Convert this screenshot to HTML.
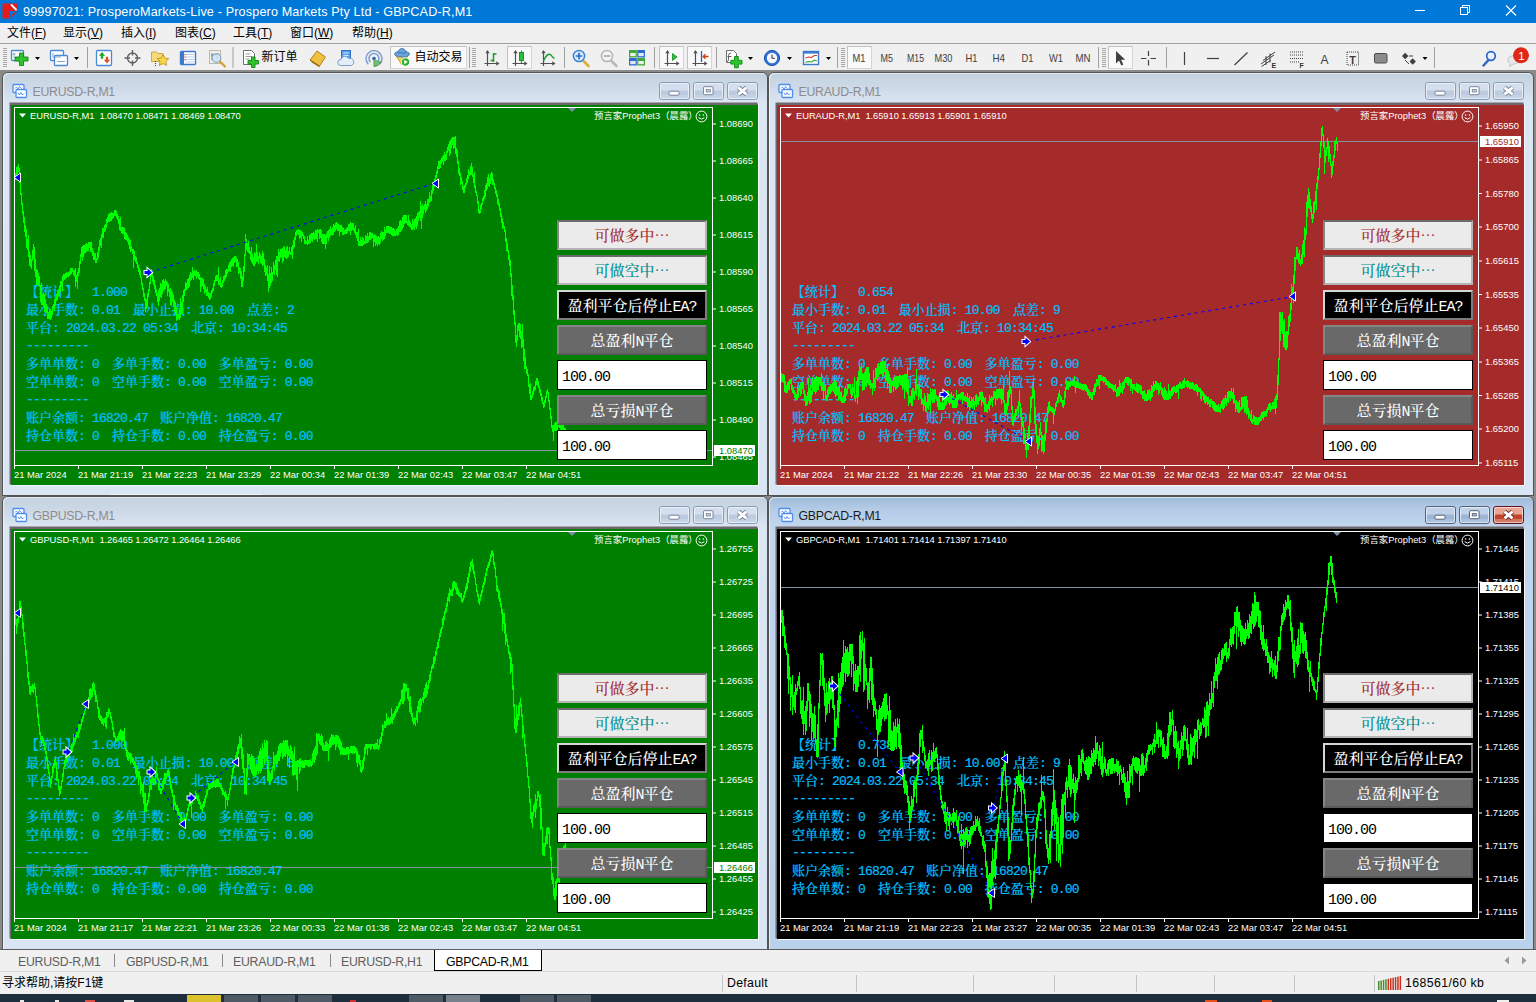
<!DOCTYPE html><html lang="zh"><head><meta charset="utf-8"><title>MT4</title><style>
*{box-sizing:border-box;margin:0;padding:0}
html,body{width:1536px;height:1002px;overflow:hidden;background:#f0f0f0}
body{position:relative;font-family:"Liberation Sans","Noto Sans CJK SC",sans-serif;font-size:12px;color:#000}
.abs{position:absolute}
#titlebar{left:0;top:0;width:1536px;height:23px;background:#0078d7;color:#fff}
#titlebar .t{position:absolute;left:23px;top:5px;font-size:12.6px;white-space:nowrap;letter-spacing:0.16px;transform-origin:0 0}
#menubar{left:0;top:23px;width:1536px;height:21px;background:#f0f0f0;border-bottom:1px solid #a0a0a0}
#menubar span{position:absolute;top:0px;font-size:12px;white-space:nowrap;font-family:"Liberation Sans","Noto Sans CJK SC",sans-serif}
#toolbar{left:0;top:44px;width:1536px;height:27px;background:#f0f0f0}
#mdi{left:0;top:70px;width:1536px;height:880px;background:#8a8a8a}
.win{position:absolute;border-radius:5px 5px 0 0;background:linear-gradient(#c3d1e0 0,#cdd9e7 14px,#dbe6f3 30px,#d9e5f2 100%);box-shadow:0 0 0 1px #545454, inset 1px 1px 0 rgba(255,255,255,.55)}
.win.act{background:linear-gradient(#9fbbdb 0,#b4cbe6 12px,#c2d6ee 30px,#b9d1ea 100%)}
.win .wt{position:absolute;left:29.5px;top:12px;font-size:12.3px;letter-spacing:-0.27px;color:#8c8c8c;white-space:nowrap;transform-origin:0 50%}
.win.act .wt{color:#1a1a1a}
.chart{position:absolute;overflow:hidden}
.tx{position:absolute;white-space:nowrap;line-height:1}
.ax{font-size:9.4px;color:#fff;font-family:"Liberation Sans",sans-serif}

.hd{letter-spacing:-0.07px}
.lab{font-size:9.4px;color:#fff;font-family:"Liberation Sans","Noto Sans CJK SC",sans-serif}
.cur{background:#fff;padding:1px 0 1px 5px;width:41px;height:11px;line-height:9px}
.pn{font-size:13px;color:#00bfff;height:16px;line-height:16px;-webkit-text-stroke:0.2px #00bfff}
.cj{font-family:"Noto Serif CJK SC","Noto Sans CJK SC",serif;font-weight:500}
.hw{font-family:"Liberation Mono",monospace;letter-spacing:-0.8px}
.btn .hw{letter-spacing:-1px}
.btn{position:absolute;width:150px;height:30px;font-size:15px;line-height:26px;text-align:center;white-space:nowrap;border:2px solid;overflow:hidden}
.b1{background:#ebebeb;border-color:#6b6b6b #b4b4b4 #b4b4b4 #858585}
.b2{background:#000;color:#fff;border-color:#d6d6d6 #7d7d7d #7d7d7d #d6d6d6}
.b3{background:#696969;color:#fff;border-color:#858585 #5a5a5a #5a5a5a #858585}
.ed{background:#fff;color:#000;border:1px solid #000;text-align:left;padding-left:4px;line-height:29px}

.tab{font-size:12.300px;color:#5e5e5e;letter-spacing:-0.250px}
</style></head><body>
<div id="titlebar" class="abs"><span class="t" id="ttl">99997021: ProsperoMarkets-Live - Prospero Markets Pty Ltd - GBPCAD-R,M1</span><svg class="abs" style="left:2px;top:3px" width="17" height="17" viewBox="0 0 17 17"><rect x="0.5" y="0.5" width="15" height="15" fill="#e41b1b"/><rect x="8" y="8" width="8" height="8" fill="#0078d7"/><path d="M9.500 2 l4.500 4.500" stroke="#fff" stroke-width="1.800" stroke-linecap="round"/><path d="M9.500 13.500 l4 -4" stroke="#e41b1b" stroke-width="1.500" stroke-linecap="round"/></svg><svg class="abs" style="left:1400px;top:0" width="136" height="23" viewBox="0 0 136 23"><path d="M15 10.500 h10" stroke="#fff" stroke-width="1"/><rect x="60.500" y="7.500" width="7" height="7" fill="none" stroke="#fff"/><path d="M62.500 7.500 v-2 h7 v7 h-2" fill="none" stroke="#fff"/><path d="M106 5.500 l10 10 M116 5.500 l-10 10" stroke="#fff" stroke-width="1.100"/></svg></div>
<div id="menubar" class="abs">
<span style="left:7px">文件(<u>F</u>)</span>
<span style="left:63px">显示(<u>V</u>)</span>
<span style="left:121px">插入(<u>I</u>)</span>
<span style="left:175px">图表(<u>C</u>)</span>
<span style="left:233px">工具(<u>T</u>)</span>
<span style="left:290px">窗口(<u>W</u>)</span>
<span style="left:352px">帮助(<u>H</u>)</span>
</div>
<div id="toolbar" class="abs"><svg width="1536" height="27" viewBox="0 0 1536 27" style="position:absolute;left:0;top:0;font-family:'Liberation Sans','Noto Sans CJK SC',sans-serif"><rect x="3" y="4" width="4" height="1" fill="#a8a8a8"/><rect x="3" y="6" width="4" height="1" fill="#a8a8a8"/><rect x="3" y="8" width="4" height="1" fill="#a8a8a8"/><rect x="3" y="10" width="4" height="1" fill="#a8a8a8"/><rect x="3" y="12" width="4" height="1" fill="#a8a8a8"/><rect x="3" y="14" width="4" height="1" fill="#a8a8a8"/><rect x="3" y="16" width="4" height="1" fill="#a8a8a8"/><rect x="3" y="18" width="4" height="1" fill="#a8a8a8"/><rect x="3" y="20" width="4" height="1" fill="#a8a8a8"/><rect x="3" y="22" width="4" height="1" fill="#a8a8a8"/><rect x="11.5" y="6.5" width="12" height="10" rx="1" fill="#fff" stroke="#4a8ad4" stroke-width="1.3"/><path d="M14 9 v5 M14 9 l-1.5 2 M14 9 l1.5 2" stroke="#7a9cc4" fill="none" stroke-width="0.8"/><path d="M19.5 9 h4 v4 h4.5 v4 h-4.5 v4.5 h-4 v-4.5 h-4.5 v-4 h4.500 z" fill="#2fc42f" stroke="#0f8a0f" stroke-width="0.9"/><path d="M35 13 h5 l-2.5 3 z" fill="#000"/><rect x="50.500" y="6.500" width="13" height="10" rx="1" fill="#fff" stroke="#4a8ad4" stroke-width="1.3"/><rect x="54.500" y="11.500" width="13" height="10" rx="1" fill="#fff" stroke="#4a8ad4" stroke-width="1.3"/><path d="M53 9 v5 M55 13 h6 M57 17.5 h8" stroke="#7a9cc4" stroke-width="0.9" fill="none"/><path d="M74 13 h5 l-2.5 3 z" fill="#000"/><rect x="87.0" y="3" width="1" height="21" fill="#a0a0a0"/><rect x="96.500" y="6.500" width="15" height="15" rx="1" fill="#fff" stroke="#4a8ad4" stroke-width="1.3"/><path d="M102 8 l3.200 3.800 h-2 v3 h-2.400 v-3 h-2 z" fill="#22a822"/><path d="M107 19.500 l3.200 -3.800 h-2 v-3 h-2.400 v3 h-2 z" fill="#e0502a"/><circle cx="132.500" cy="14" r="5" fill="none" stroke="#606060" stroke-width="1.4"/><path d="M132.500 6 v5.500 M132.500 16.500 v5.500 M124.500 14 h5.500 M135 14 h5.500" stroke="#606060" stroke-width="1.4"/><path d="M151.500 8 h5 l1.500 1.500 h5 v8 h-11.500 z" fill="#f4dc7c" stroke="#c8a030" stroke-width="0.9"/><path d="M163 10.500 l1.800 3.600 4 .5 -2.900 2.800 .7 4 -3.600 -1.900 -3.600 1.900 .7 -4 -2.900 -2.800 4 -.5 z" fill="#f8d84a" stroke="#c09020" stroke-width="0.9"/><path d="M155.500 17 v5" stroke="#404040" stroke-width="1" stroke-dasharray="1 1"/><rect x="180.500" y="7.500" width="15" height="13" rx="1" fill="#fff" stroke="#3b78d0" stroke-width="1.4"/><rect x="181" y="8" width="3" height="12" fill="#3b78d0"/><path d="M186 10.500 h8 M186 13 h8 M186 15.500 h8 M186 18 h8" stroke="#a8c0e4" stroke-width="0.8"/><rect x="184.500" y="10" width="1.200" height="1.200" fill="#e03030"/><rect x="184.500" y="12.500" width="1.200" height="1.200" fill="#e03030"/><rect x="184.500" y="15" width="1.200" height="1.200" fill="#e03030"/><rect x="209.500" y="6.500" width="11" height="13" fill="#f4f0e8" stroke="#c0b8a8" stroke-width="1"/><path d="M212 9 v7 M217 9 v7 M211 11 h7" stroke="#707888" stroke-width="0.9"/><circle cx="216.500" cy="14" r="4.300" fill="#cfe4f8" fill-opacity="0.85" stroke="#8aa8c8" stroke-width="1.2"/><path d="M220 17.500 l5 5" stroke="#d0a030" stroke-width="2.200" stroke-linecap="round"/><rect x="232.5" y="3" width="1" height="21" fill="#a0a0a0"/><path d="M243.500 6.500 h8 l3 3 v11 h-11 z" fill="#fff" stroke="#707070" stroke-width="1"/><path d="M245.500 10 h5 M245.500 12.500 h6.500 M245.500 15 h4" stroke="#909090" stroke-width="0.9"/><path d="M251.500 13 h3.500 v3.500 h3.500 v3.500 h-3.500 v3.500 h-3.500 v-3.500 h-3.500 v-3.500 h3.500 z" fill="#2fc42f" stroke="#0f8a0f" stroke-width="0.9"/><text x="261.500" y="17" font-size="12" fill="#000">新订单</text><path d="M310 16 l7 -9 8.500 6 -6 9 z" fill="#f0c040" stroke="#b88418" stroke-width="1"/><path d="M310 16 l9.500 6 M311.500 17.800 l8 5" stroke="#8a5c10" stroke-width="0.9" fill="none"/><rect x="341.500" y="6.500" width="9" height="10" fill="#5aa0ec" stroke="#2f6fc4" stroke-width="1"/><path d="M343.500 9 h5 M343.500 11.500 h5" stroke="#d8e8fc" stroke-width="1"/><path d="M340.500 21.500 a3 3 0 0 1 .5 -6 a4 4 0 0 1 7.500 -1 a3.500 3.500 0 0 1 3 7 z" fill="#e4eefa" stroke="#7c9cc8" stroke-width="1"/><circle cx="374" cy="14.500" r="1.800" fill="#3060c0"/><path d="M370.500 18 a5 5 0 1 1 7 0 M368.300 20.200 a8 8 0 1 1 11.400 0" fill="none" stroke="#7c9cd0" stroke-width="1.500"/><path d="M374 15 v7.500 a8 8 0 0 0 7 -5" fill="#58b058" fill-opacity="0.800" stroke="#3a8a3a" stroke-width="0.800"/><rect x="390.500" y="2.500" width="76" height="22" fill="#f9f9f9" stroke="#d4d4d4"/><path d="M390.500 24.500 V2.500 H466.500" stroke="#c2c2c2" fill="none"/><path d="M395.500 11 l6.500 10 6.500 -10 z" fill="#f0d060" stroke="#b89020" stroke-width="0.9"/><ellipse cx="402" cy="10" rx="7.500" ry="3" fill="#6aa4dc" stroke="#3a70b0" stroke-width="0.800"/><path d="M398 9 a4 4.500 0 0 1 8 0 z" fill="#6aa4dc" stroke="#3a70b0" stroke-width="0.800"/><circle cx="405.500" cy="18" r="4.200" fill="#28b428" stroke="#fff" stroke-width="0.900"/><path d="M404.200 15.800 v4.400 l3.600 -2.200 z" fill="#fff"/><text x="414.500" y="17" font-size="12" fill="#000">自动交易</text><rect x="469.0" y="3" width="1" height="21" fill="#a0a0a0"/><rect x="472" y="4" width="4" height="1" fill="#a8a8a8"/><rect x="472" y="6" width="4" height="1" fill="#a8a8a8"/><rect x="472" y="8" width="4" height="1" fill="#a8a8a8"/><rect x="472" y="10" width="4" height="1" fill="#a8a8a8"/><rect x="472" y="12" width="4" height="1" fill="#a8a8a8"/><rect x="472" y="14" width="4" height="1" fill="#a8a8a8"/><rect x="472" y="16" width="4" height="1" fill="#a8a8a8"/><rect x="472" y="18" width="4" height="1" fill="#a8a8a8"/><rect x="472" y="20" width="4" height="1" fill="#a8a8a8"/><rect x="472" y="22" width="4" height="1" fill="#a8a8a8"/><path d="M487.5 8 V22 M484.5 19.5 H498" stroke="#505050" stroke-width="1.2" fill="none"/><path d="M487.5 6 l-2.2 3.2 h4.4 z M499.5 19.5 l-3.2 -2.2 v4.4 z" fill="#505050"/><path d="M493.500 9 v9 M493.500 10 h3 M490.500 16.500 h3" stroke="#189a30" stroke-width="1.5" fill="none"/><rect x="507.5" y="2.5" width="24" height="22" fill="#f9f9f9" stroke="#d4d4d4"/><path d="M507.5 24.5 V2.5 H531.5" stroke="#c2c2c2" fill="none"/><path d="M515.5 8 V22 M512.5 19.5 H526" stroke="#505050" stroke-width="1.2" fill="none"/><path d="M515.5 6 l-2.2 3.2 h4.4 z M527.5 19.5 l-3.2 -2.2 v4.4 z" fill="#505050"/><path d="M521.500 6.500 v12.500" stroke="#189a30" stroke-width="1.200"/><rect x="519.500" y="8.500" width="4" height="8" fill="#28c040" stroke="#148a28" stroke-width="0.900"/><path d="M543.5 8 V22 M540.5 19.5 H554" stroke="#505050" stroke-width="1.2" fill="none"/><path d="M543.5 6 l-2.2 3.2 h4.4 z M555.5 19.5 l-3.2 -2.2 v4.4 z" fill="#505050"/><path d="M543.500 17 q5 -11 9 -4 l2 1.500" stroke="#189a30" stroke-width="1.400" fill="none"/><rect x="564.0" y="3" width="1" height="21" fill="#a0a0a0"/><path d="M584 17.500 l4.500 4.500" stroke="#d8b030" stroke-width="2.600" stroke-linecap="round"/><circle cx="579" cy="12" r="5.600" fill="#d8ebfc" stroke="#3c80d4" stroke-width="1.500"/><path d="M579 8.800 v6.400 M575.800 12 h6.400" stroke="#2c6cc8" stroke-width="1.700"/><path d="M612 17.500 l4.500 4.500" stroke="#b8b8b8" stroke-width="2.600" stroke-linecap="round"/><circle cx="607" cy="12" r="5.600" fill="#f4f4f4" stroke="#b4b4b4" stroke-width="1.500"/><path d="M603.800 12 h6.400" stroke="#a8a8a8" stroke-width="1.700"/><rect x="629" y="6" width="7.800" height="7.500" fill="#3ea83e"/><rect x="637.200" y="6" width="7.800" height="7.500" fill="#2e6ad0"/><rect x="629" y="14" width="7.800" height="7.500" fill="#2e6ad0"/><rect x="637.200" y="14" width="7.800" height="7.500" fill="#3ea83e"/><rect x="630.200" y="9" width="5.400" height="3.200" fill="#e8f4e8"/><rect x="638.400" y="9" width="5.400" height="3.200" fill="#e0eafc"/><rect x="630.200" y="17" width="5.400" height="3.200" fill="#e0eafc"/><rect x="638.400" y="17" width="5.400" height="3.200" fill="#e8f4e8"/><rect x="654.0" y="3" width="1" height="21" fill="#a0a0a0"/><rect x="659.5" y="2.5" width="24" height="22" fill="#f9f9f9" stroke="#d4d4d4"/><path d="M659.5 24.5 V2.5 H683.5" stroke="#c2c2c2" fill="none"/><path d="M667.5 8 V22 M664.5 19.5 H678" stroke="#505050" stroke-width="1.2" fill="none"/><path d="M667.5 6 l-2.2 3.2 h4.4 z M679.5 19.5 l-3.2 -2.2 v4.4 z" fill="#505050"/><path d="M672.500 9.500 v7 l4.500 -3.500 z" fill="#30c040" stroke="#148a28" stroke-width="0.800"/><rect x="687.5" y="2.5" width="24" height="22" fill="#f9f9f9" stroke="#d4d4d4"/><path d="M687.5 24.5 V2.5 H711.5" stroke="#c2c2c2" fill="none"/><path d="M695.5 8 V22 M692.5 19.5 H706" stroke="#505050" stroke-width="1.2" fill="none"/><path d="M695.5 6 l-2.2 3.2 h4.4 z M707.5 19.5 l-3.2 -2.2 v4.4 z" fill="#505050"/><path d="M701.500 7 v11" stroke="#2060c0" stroke-width="1.300"/><path d="M708.500 12.500 h-5 m2 -2.200 l-2.400 2.200 2.400 2.200" stroke="#d04010" stroke-width="1.300" fill="none"/><rect x="716.0" y="3" width="1" height="21" fill="#a0a0a0"/><path d="M726.500 6.500 h7 l3 3 v9 h-10 z" fill="#fff" stroke="#707070" stroke-width="1"/><path d="M731 9 q-2.500 0 -2.500 2.500 v4 q0 2 -1.500 2 M727.500 12.500 h4" stroke="#505050" stroke-width="0.900" fill="none"/><path d="M734.500 12.500 h3.800 v3.800 h3.700 v3.800 h-3.700 v3.700 h-3.800 v-3.700 h-3.700 v-3.800 h3.700 z" fill="#2fc42f" stroke="#0f8a0f" stroke-width="0.900"/><path d="M748 13 h5 l-2.5 3 z" fill="#000"/><circle cx="772" cy="14" r="7.600" fill="#2f74d8" stroke="#1c50a8" stroke-width="1"/><circle cx="772" cy="14" r="5.200" fill="#f4f8ff"/><path d="M772 10.500 v3.800 h3" stroke="#404040" stroke-width="1.100" fill="none"/><path d="M787 13 h5 l-2.5 3 z" fill="#000"/><rect x="803.500" y="7.500" width="15" height="13" fill="#fff" stroke="#3b78d0" stroke-width="1.400"/><rect x="803" y="7" width="16" height="2.600" fill="#3b78d0"/><path d="M805.500 14 l3 -1 3 .5 3 -2 2.500 0" stroke="#d03828" stroke-width="1.100" fill="none"/><path d="M805.500 18.500 l3 -1 3 .5 3 -2 2.500 1" stroke="#28a030" stroke-width="1.100" fill="none"/><path d="M826 13 h5 l-2.5 3 z" fill="#000"/><rect x="837.0" y="3" width="1" height="21" fill="#a0a0a0"/><rect x="841" y="4" width="4" height="1" fill="#a8a8a8"/><rect x="841" y="6" width="4" height="1" fill="#a8a8a8"/><rect x="841" y="8" width="4" height="1" fill="#a8a8a8"/><rect x="841" y="10" width="4" height="1" fill="#a8a8a8"/><rect x="841" y="12" width="4" height="1" fill="#a8a8a8"/><rect x="841" y="14" width="4" height="1" fill="#a8a8a8"/><rect x="841" y="16" width="4" height="1" fill="#a8a8a8"/><rect x="841" y="18" width="4" height="1" fill="#a8a8a8"/><rect x="841" y="20" width="4" height="1" fill="#a8a8a8"/><rect x="841" y="22" width="4" height="1" fill="#a8a8a8"/><rect x="847.5" y="2.5" width="24" height="22" fill="#f9f9f9" stroke="#d4d4d4"/><path d="M847.5 24.5 V2.5 H871.5" stroke="#c2c2c2" fill="none"/><text x="852.5" y="18" font-size="10.500" fill="#404040" textLength="13" lengthAdjust="spacingAndGlyphs">M1</text><text x="880.5" y="18" font-size="10.500" fill="#404040" textLength="12.5" lengthAdjust="spacingAndGlyphs">M5</text><text x="907" y="18" font-size="10.500" fill="#404040" textLength="17" lengthAdjust="spacingAndGlyphs">M15</text><text x="934.5" y="18" font-size="10.500" fill="#404040" textLength="18" lengthAdjust="spacingAndGlyphs">M30</text><text x="965.5" y="18" font-size="10.500" fill="#404040" textLength="12" lengthAdjust="spacingAndGlyphs">H1</text><text x="992.5" y="18" font-size="10.500" fill="#404040" textLength="12.5" lengthAdjust="spacingAndGlyphs">H4</text><text x="1021.5" y="18" font-size="10.500" fill="#404040" textLength="12" lengthAdjust="spacingAndGlyphs">D1</text><text x="1049" y="18" font-size="10.500" fill="#404040" textLength="14" lengthAdjust="spacingAndGlyphs">W1</text><text x="1075.5" y="18" font-size="10.500" fill="#404040" textLength="15" lengthAdjust="spacingAndGlyphs">MN</text><rect x="1098.0" y="3" width="1" height="21" fill="#a0a0a0"/><rect x="1102" y="4" width="4" height="1" fill="#a8a8a8"/><rect x="1102" y="6" width="4" height="1" fill="#a8a8a8"/><rect x="1102" y="8" width="4" height="1" fill="#a8a8a8"/><rect x="1102" y="10" width="4" height="1" fill="#a8a8a8"/><rect x="1102" y="12" width="4" height="1" fill="#a8a8a8"/><rect x="1102" y="14" width="4" height="1" fill="#a8a8a8"/><rect x="1102" y="16" width="4" height="1" fill="#a8a8a8"/><rect x="1102" y="18" width="4" height="1" fill="#a8a8a8"/><rect x="1102" y="20" width="4" height="1" fill="#a8a8a8"/><rect x="1102" y="22" width="4" height="1" fill="#a8a8a8"/><rect x="1108.5" y="2.5" width="24" height="22" fill="#f9f9f9" stroke="#d4d4d4"/><path d="M1108.5 24.5 V2.5 H1132.5" stroke="#c2c2c2" fill="none"/><path d="M1116 7 v12.500 l3 -3 2.300 5 2 -1 -2.300 -4.800 h4.200 z" fill="#404040"/><path d="M1148.500 7 v5 M1148.500 16 v5.500 M1141 14.500 h5.500 M1150.500 14.500 h5.500" stroke="#404040" stroke-width="1.200"/><rect x="1166.0" y="3" width="1" height="21" fill="#a0a0a0"/><path d="M1184.500 8 v13" stroke="#404040" stroke-width="1.200"/><path d="M1207 14.500 h12" stroke="#404040" stroke-width="1.200"/><path d="M1234.500 21 l13 -12.500" stroke="#404040" stroke-width="1.200"/><path d="M1261 20 l13 -9 M1263 16.500 l12 -8.500 M1261.500 22.500 l9 -6 M1266 12 v9 M1270 9.500 v9" stroke="#404040" stroke-width="1"/><text x="1271.500" y="24" font-size="7" font-weight="bold" fill="#303030">E</text><path d="M1290 8 h13 M1290 11 h13 M1290 14.500 h13 M1290 18 h9" stroke="#404040" stroke-width="1" stroke-dasharray="1 1"/><text x="1299.500" y="24" font-size="7" font-weight="bold" fill="#303030">F</text><text x="1320.500" y="20" font-size="12" fill="#404040">A</text><rect x="1347" y="8" width="11.500" height="13" fill="none" stroke="#404040" stroke-width="1" stroke-dasharray="1 1"/><text x="1349.200" y="19.500" font-size="11" font-weight="bold" fill="#404040">T</text><rect x="1374.500" y="9.500" width="12.500" height="9.500" rx="1.500" fill="#8c8c8c" stroke="#4c4c4c" stroke-width="1"/><path d="M1402 12 l3.200 -3.200 3.200 3.200 -3.200 3.200 z M1409.500 17.500 l3.200 -3.200 3.200 3.200 -3.200 3.200 z" fill="#404040"/><path d="M1405 16 l4 4 M1409 12 l4 -0" stroke="#404040" stroke-width="1" fill="none"/><path d="M1422.5 13 h5 l-2.5 3 z" fill="#000"/><rect x="1434.0" y="3" width="1" height="21" fill="#a0a0a0"/><path d="M1483.500 21.500 l5 -5.500" stroke="#2a62c8" stroke-width="2.400" stroke-linecap="round"/><circle cx="1491" cy="12" r="4.300" fill="#eaf2fe" stroke="#2a62c8" stroke-width="1.700"/><path d="M1508 15 a5.500 4 0 1 1 5 5 l-3.500 2.500 .8 -3 a5 4 0 0 1 -2.300 -4.500 z" fill="#e8e8e8" stroke="#b8b8b8" stroke-width="0.800"/><circle cx="1521" cy="11.300" r="8" fill="#e02818"/><text x="1518.200" y="15.500" font-size="11.500" fill="#fff">1</text></svg></div>
<div id="mdi" class="abs"></div>
<div class="win" style="left:3px;top:73px;width:764px;height:422px"><span class="wt">EURUSD-R,M1</span><svg class="abs" style="left:9px;top:10px" width="16" height="16" viewBox="0 0 16 16"><rect x="1" y="1.500" width="11" height="8" rx="1" fill="#fff" stroke="#4c8cf0" stroke-width="1.300"/><path d="M3 5.500 l1.500 -1.500 1.500 2 1.500 -2.500 2 2" stroke="#4c8cf0" stroke-width="0.900" fill="none"/><rect x="4" y="6.500" width="10.500" height="8" rx="1" fill="#fff" stroke="#4c8cf0" stroke-width="1.300"/><path d="M6 9.500 l1.500 2.500 1.500 -2.500 1.500 2.500 1.500 -1.500" stroke="#4c8cf0" stroke-width="0.900" fill="none"/></svg><svg class="abs" style="right:77px;top:9px" width="31" height="18" viewBox="0 0 31 18"><rect x="0.500" y="0.500" width="30" height="17" rx="2.500" fill="#d3deee" stroke="#8d9bb6"/><rect x="1.500" y="8.500" width="28" height="8" rx="1.500" fill="#bccbe0"/><rect x="1.500" y="13" width="28" height="3.500" rx="1.500" fill="#c6d3e6"/><rect x="1.500" y="1.500" width="28" height="15" rx="1.800" fill="none" stroke="#fff" stroke-opacity="0.550"/><rect x="10" y="9.200" width="10" height="4" rx="1" fill="#fff" stroke="#6e7990" stroke-width="0.900"/></svg><svg class="abs" style="right:43px;top:9px" width="31" height="18" viewBox="0 0 31 18"><rect x="0.500" y="0.500" width="30" height="17" rx="2.500" fill="#d3deee" stroke="#8d9bb6"/><rect x="1.500" y="8.500" width="28" height="8" rx="1.500" fill="#bccbe0"/><rect x="1.500" y="13" width="28" height="3.500" rx="1.500" fill="#c6d3e6"/><rect x="1.500" y="1.500" width="28" height="15" rx="1.800" fill="none" stroke="#fff" stroke-opacity="0.550"/><rect x="10.500" y="4.700" width="9.500" height="8" rx="1" fill="#fff" stroke="#6e7990" stroke-width="0.900"/><rect x="13.200" y="7.600" width="4.100" height="2.400" fill="#bccbe0" stroke="#6e7990" stroke-width="0.700"/></svg><svg class="abs" style="right:9px;top:9px" width="31" height="18" viewBox="0 0 31 18"><rect x="0.500" y="0.500" width="30" height="17" rx="2.500" fill="#d3deee" stroke="#8d9bb6"/><rect x="1.500" y="8.500" width="28" height="8" rx="1.500" fill="#bccbe0"/><rect x="1.500" y="13" width="28" height="3.500" rx="1.500" fill="#c6d3e6"/><rect x="1.500" y="1.500" width="28" height="15" rx="1.800" fill="none" stroke="#fff" stroke-opacity="0.550"/><path d="M11.500 5.600 l8 6.800 M19.500 5.600 l-8 6.800" stroke="#6e7990" stroke-width="4.600" fill="none" stroke-linecap="butt"/><path d="M11.500 5.600 l8 6.800 M19.500 5.600 l-8 6.800" stroke="#fff" stroke-width="2.900" fill="none"/></svg></div>
<div class="chart" id="c1" style="left:11px;top:104px;width:747px;height:381px;background:#008000;box-shadow:-1px -1px 0 0.5px #6e686e, inset 0 1px 0 #6e686e, 1px 1px 0 0 #f4f8fc"><span class="tx pn" style="left:15.0px;top:179.0px"><span class="cj">【统计】</span><span class="hw">&nbsp;&nbsp;1.000</span></span>
<span class="tx pn" style="left:15.0px;top:197.0px"><span class="cj">最小手数</span><span class="hw">:&nbsp;0.01</span></span>
<span class="tx pn" style="left:121.8px;top:197.0px"><span class="cj">最小止损</span><span class="hw">:&nbsp;10.00</span></span>
<span class="tx pn" style="left:235.9px;top:197.0px"><span class="cj">点差</span><span class="hw">:&nbsp;2</span></span>
<span class="tx pn" style="left:15.0px;top:215.0px"><span class="cj">平台</span><span class="hw">:&nbsp;2024.03.22&nbsp;05:34</span></span>
<span class="tx pn" style="left:180.0px;top:215.0px"><span class="cj">北京</span><span class="hw">:&nbsp;10:34:45</span></span>
<span class="tx pn" style="left:15.0px;top:233.0px"><span class="hw">---------</span></span>
<span class="tx pn" style="left:15.0px;top:251.0px"><span class="cj">多单单数</span><span class="hw">:&nbsp;0</span></span>
<span class="tx pn" style="left:101.0px;top:251.0px"><span class="cj">多单手数</span><span class="hw">:&nbsp;0.00</span></span>
<span class="tx pn" style="left:207.8px;top:251.0px"><span class="cj">多单盈亏</span><span class="hw">:&nbsp;0.00</span></span>
<span class="tx pn" style="left:15.0px;top:269.0px"><span class="cj">空单单数</span><span class="hw">:&nbsp;0</span></span>
<span class="tx pn" style="left:101.0px;top:269.0px"><span class="cj">空单手数</span><span class="hw">:&nbsp;0.00</span></span>
<span class="tx pn" style="left:207.8px;top:269.0px"><span class="cj">空单盈亏</span><span class="hw">:&nbsp;0.00</span></span>
<span class="tx pn" style="left:15.0px;top:287.0px"><span class="hw">---------</span></span>
<span class="tx pn" style="left:15.0px;top:305.0px"><span class="cj">账户余额</span><span class="hw">:&nbsp;16820.47</span></span>
<span class="tx pn" style="left:149.0px;top:305.0px"><span class="cj">账户净值</span><span class="hw">:&nbsp;16820.47</span></span>
<span class="tx pn" style="left:15.0px;top:323.0px"><span class="cj">持仓单数</span><span class="hw">:&nbsp;0</span></span>
<span class="tx pn" style="left:101.0px;top:323.0px"><span class="cj">持仓手数</span><span class="hw">:&nbsp;0.00</span></span>
<span class="tx pn" style="left:207.8px;top:323.0px"><span class="cj">持仓盈亏</span><span class="hw">:&nbsp;0.00</span></span>
<div class="abs" style="left:3px;top:346.0px;width:698px;height:1px;background:#8492a6"></div>
<svg class="abs" style="left:0;top:0" width="747" height="382" viewBox="0 0 747 382"><path d="M3.5 66.1V76.5M4.5 68.5V76.2M5.5 62.5V73.5M6.5 62.0V69.8M7.5 60.1V67.7M8.5 63.5V79.1M9.5 75.7V91.2M10.5 88.7V100.7M11.5 98.7V109.6M12.5 106.9V118.9M13.5 113.4V127.8M14.5 121.1V132.5M15.5 125.4V143.5M16.5 135.2V146.0M17.5 130.7V153.3M18.5 146.9V161.6M19.5 151.2V162.6M20.5 155.3V164.5M21.5 146.0V157.0M22.5 139.9V155.3M23.5 143.2V167.4M24.5 155.4V173.4M25.5 164.7V180.6M26.5 166.2V181.7M27.5 168.8V181.9M28.5 172.0V183.0M29.5 181.0V197.6M30.5 179.0V200.6M31.5 189.6V201.4M32.5 188.9V202.8M33.5 189.8V208.4M34.5 194.5V207.6M35.5 199.6V209.2M36.5 202.4V215.1M37.5 207.5V215.0M38.5 207.0V215.3M39.5 205.3V215.5M40.5 206.6V213.6M41.5 201.5V210.6M42.5 200.1V205.4M43.5 194.8V207.4M44.5 193.4V202.3M45.5 190.4V196.6M46.5 187.2V196.0M47.5 185.0V192.9M48.5 181.7V191.5M49.5 176.8V187.7M50.5 177.2V182.5M51.5 171.6V187.3M52.5 169.5V176.9M53.5 170.2V176.2M54.5 168.9V175.3M55.5 167.7V174.1M56.5 168.5V173.2M57.5 167.8V173.4M58.5 166.8V172.0M59.5 163.7V171.0M60.5 163.7V170.2M61.5 163.7V168.1M62.5 165.7V170.8M63.5 166.2V172.8M64.5 164.3V183.3M65.5 170.5V177.8M66.5 168.1V185.4M67.5 163.8V172.0M68.5 156.6V168.8M69.5 150.2V159.6M70.5 142.6V152.6M71.5 141.5V156.9M72.5 141.0V153.1M73.5 140.5V150.1M74.5 139.5V148.7M75.5 138.8V148.2M76.5 139.8V146.8M77.5 138.1V146.5M78.5 138.1V144.1M79.5 138.0V148.3M80.5 137.9V147.6M81.5 143.9V151.5M82.5 146.8V155.5M83.5 149.2V156.1M84.5 149.0V159.3M85.5 153.7V158.8M86.5 148.0V156.1M87.5 142.5V154.1M88.5 136.3V146.7M89.5 133.5V141.7M90.5 129.9V143.6M91.5 123.6V133.7M92.5 124.2V133.8M93.5 121.1V128.0M94.5 119.5V127.2M95.5 114.8V123.8M96.5 113.4V118.7M97.5 110.1V117.9M98.5 109.4V117.5M99.5 108.5V117.4M100.5 107.9V117.2M101.5 109.1V114.6M102.5 109.0V113.9M103.5 106.3V111.8M104.5 106.0V112.3M105.5 106.5V114.2M106.5 110.3V115.8M107.5 111.5V120.0M108.5 115.1V125.9M109.5 113.3V127.2M110.5 122.7V128.9M111.5 123.4V130.2M112.5 122.6V129.8M113.5 123.7V135.2M114.5 127.5V135.7M115.5 129.3V135.5M116.5 130.5V137.9M117.5 133.2V140.5M118.5 135.0V145.3M119.5 136.0V147.9M120.5 141.6V147.3M121.5 144.7V149.8M122.5 144.5V164.4M123.5 147.1V156.0M124.5 151.8V157.9M125.5 153.3V160.2M126.5 157.6V163.5M127.5 161.4V168.3M128.5 163.9V170.8M129.5 166.1V174.4M130.5 172.5V181.3M131.5 178.9V186.2M132.5 183.7V192.9M133.5 189.1V196.5M134.5 194.2V207.7M135.5 194.8V204.6M136.5 188.8V203.9M137.5 184.7V192.9M138.5 177.5V187.1M139.5 170.9V180.3M140.5 165.2V172.8M141.5 166.0V177.5M142.5 171.5V181.3M143.5 176.4V185.4M144.5 180.5V188.9M145.5 184.7V191.8M146.5 189.3V198.2M147.5 185.7V202.1M148.5 183.6V196.8M149.5 179.0V193.4M150.5 179.7V193.8M151.5 176.2V189.5M152.5 175.0V186.9M153.5 176.5V185.7M154.5 175.4V185.0M155.5 176.7V182.0M156.5 178.1V192.3M157.5 180.0V188.0M158.5 184.6V192.5M159.5 184.4V200.9M160.5 186.2V201.6M161.5 188.2V197.7M162.5 190.7V201.5M163.5 196.3V207.8M164.5 197.9V210.8M165.5 203.1V216.7M166.5 209.6V216.1M167.5 209.6V214.8M168.5 205.2V215.7M169.5 193.5V213.5M170.5 198.3V209.1M171.5 190.6V210.2M172.5 185.8V197.6M173.5 184.5V191.9M174.5 178.4V187.2M175.5 178.8V185.8M176.5 175.1V184.9M177.5 173.9V184.4M178.5 170.9V182.9M179.5 168.1V177.3M180.5 169.4V176.4M181.5 162.8V173.8M182.5 167.1V176.3M183.5 166.3V172.3M184.5 166.5V172.4M185.5 165.9V175.1M186.5 167.6V173.3M187.5 167.9V175.4M188.5 169.7V176.4M189.5 173.0V188.4M190.5 173.5V182.8M191.5 173.8V181.5M192.5 174.8V185.2M193.5 180.4V189.7M194.5 181.9V187.7M195.5 185.1V191.7M196.5 183.0V192.1M197.5 187.8V194.0M198.5 189.4V195.9M199.5 189.0V195.4M200.5 186.3V192.8M201.5 184.0V189.3M202.5 178.7V187.2M203.5 176.3V182.1M204.5 171.5V178.3M205.5 170.6V176.9M206.5 170.9V177.0M207.5 162.9V180.8M208.5 174.5V180.8M209.5 173.4V182.8M210.5 178.6V184.3M211.5 176.4V182.9M212.5 171.9V179.2M213.5 170.9V176.7M214.5 166.1V174.7M215.5 165.4V173.2M216.5 164.5V169.9M217.5 160.7V168.3M218.5 157.6V166.5M219.5 156.9V167.7M220.5 154.9V162.7M221.5 153.9V161.8M222.5 152.7V162.9M223.5 151.6V158.9M224.5 152.0V158.2M225.5 153.2V162.8M226.5 154.9V162.8M227.5 158.3V170.0M228.5 162.6V169.3M229.5 163.9V175.1M230.5 167.4V182.7M231.5 171.6V183.1M232.5 161.7V176.8M233.5 150.0V167.8M234.5 129.6V151.9M235.5 135.4V146.0M236.5 139.2V147.6M237.5 136.9V149.2M238.5 143.3V149.7M239.5 147.1V155.7M240.5 143.3V157.8M241.5 149.9V159.7M242.5 152.5V162.1M243.5 148.1V162.0M244.5 149.2V159.8M245.5 140.3V158.3M246.5 148.4V158.3M247.5 152.4V159.6M248.5 147.6V155.1M249.5 150.1V158.8M250.5 151.7V160.1M251.5 146.9V161.9M252.5 149.0V161.0M253.5 155.3V168.2M254.5 160.6V171.6M255.5 162.5V170.5M256.5 161.3V177.1M257.5 169.8V188.3M258.5 162.3V183.5M259.5 168.7V181.5M260.5 162.9V178.6M261.5 167.9V176.7M262.5 158.4V169.9M263.5 160.8V170.7M264.5 155.8V165.5M265.5 151.6V170.6M266.5 152.2V173.4M267.5 145.0V156.7M268.5 148.2V157.6M269.5 145.0V154.3M270.5 144.5V153.4M271.5 143.5V158.7M272.5 143.2V157.4M273.5 142.1V152.5M274.5 145.6V153.9M275.5 142.5V154.6M276.5 142.4V153.9M277.5 147.2V153.3M278.5 142.8V150.2M279.5 147.7V150.5M280.5 142.9V150.5M281.5 141.2V154.7M282.5 136.1V144.5M283.5 133.2V142.7M284.5 127.7V136.1M285.5 125.8V132.1M286.5 125.6V130.0M287.5 125.4V130.6M288.5 125.5V135.2M289.5 126.2V134.0M290.5 127.2V137.6M291.5 127.9V131.9M292.5 129.6V135.0M293.5 132.3V140.1M294.5 136.3V140.4M295.5 137.4V140.4M296.5 132.3V140.6M297.5 136.4V140.1M298.5 131.2V140.1M299.5 129.8V139.4M300.5 129.0V136.9M301.5 128.7V138.0M302.5 128.4V134.6M303.5 128.8V136.0M304.5 125.9V135.0M305.5 126.3V134.5M306.5 125.4V137.8M307.5 125.5V129.1M308.5 125.3V134.5M309.5 125.4V134.1M310.5 126.0V137.6M311.5 130.3V140.1M312.5 130.0V140.1M313.5 130.4V140.1M314.5 130.6V144.6M315.5 128.9V140.3M316.5 126.9V134.3M317.5 125.6V137.0M318.5 125.0V133.5M319.5 122.1V132.0M320.5 124.6V130.6M321.5 122.7V130.5M322.5 119.8V130.8M323.5 121.2V127.8M324.5 118.8V127.3M325.5 118.4V125.0M326.5 119.0V127.4M327.5 119.6V126.8M328.5 121.2V132.4M329.5 120.5V127.7M330.5 121.3V127.6M331.5 123.0V130.8M332.5 124.2V130.6M333.5 125.5V130.1M334.5 124.5V129.7M335.5 124.4V129.5M336.5 123.1V128.5M337.5 120.3V127.3M338.5 120.3V126.7M339.5 118.4V130.9M340.5 119.0V126.6M341.5 119.0V125.5M342.5 118.6V126.9M343.5 124.3V129.2M344.5 121.2V131.2M345.5 127.8V134.0M346.5 128.3V136.6M347.5 124.6V142.2M348.5 136.8V141.7M349.5 132.6V142.1M350.5 136.1V142.1M351.5 132.9V142.0M352.5 133.5V141.3M353.5 136.5V140.4M354.5 131.3V139.5M355.5 132.0V138.7M356.5 129.3V138.5M357.5 131.7V137.5M358.5 128.3V136.4M359.5 128.3V135.9M360.5 128.5V134.6M361.5 129.0V134.3M362.5 130.7V142.7M363.5 129.7V138.1M364.5 131.0V141.7M365.5 132.2V139.8M366.5 133.4V141.7M367.5 132.0V139.5M368.5 132.7V141.4M369.5 128.6V139.3M370.5 126.9V134.9M371.5 127.8V137.0M372.5 127.9V136.3M373.5 122.7V135.2M374.5 125.8V132.3M375.5 121.9V129.3M376.5 122.3V128.8M377.5 122.2V129.1M378.5 122.0V129.6M379.5 122.5V130.2M380.5 123.2V131.3M381.5 123.7V132.0M382.5 124.4V132.1M383.5 124.6V131.8M384.5 127.0V131.7M385.5 124.9V130.6M386.5 124.0V131.6M387.5 121.5V130.6M388.5 116.7V127.5M389.5 115.6V128.4M390.5 117.2V126.5M391.5 113.3V125.2M392.5 110.5V123.2M393.5 110.8V120.4M394.5 111.1V118.7M395.5 110.6V119.4M396.5 117.4V121.1M397.5 110.8V121.8M398.5 115.9V123.0M399.5 117.7V124.4M400.5 120.4V125.6M401.5 115.4V125.6M402.5 116.8V125.2M403.5 114.8V125.6M404.5 113.6V123.2M405.5 111.5V125.4M406.5 109.3V121.9M407.5 107.7V117.4M408.5 107.4V114.3M409.5 96.9V117.4M410.5 101.5V124.8M411.5 99.6V114.4M412.5 102.2V110.0M413.5 99.8V106.0M414.5 97.3V108.6M415.5 99.7V106.9M416.5 95.1V104.9M417.5 95.4V101.8M418.5 88.4V98.5M419.5 92.2V98.3M420.5 86.2V97.1M421.5 80.7V90.4M422.5 78.3V86.8M423.5 75.4V82.8M424.5 71.4V79.0M425.5 66.7V73.8M426.5 62.3V70.0M427.5 56.8V64.6M428.5 57.2V64.9M429.5 56.2V64.4M430.5 53.6V59.8M431.5 52.3V58.1M432.5 50.6V60.5M433.5 47.7V56.8M434.5 49.7V57.1M435.5 47.4V55.8M436.5 42.7V49.2M437.5 39.7V46.5M438.5 37.2V51.6M439.5 35.5V49.7M440.5 33.7V44.1M441.5 33.4V41.0M442.5 33.4V45.2M443.5 33.3V44.2M444.5 31.9V50.1M445.5 44.4V52.8M446.5 46.1V60.0M447.5 57.0V69.5M448.5 63.6V71.6M449.5 68.5V81.4M450.5 73.3V80.0M451.5 77.4V86.4M452.5 82.2V88.9M453.5 80.7V89.0M454.5 78.7V83.5M455.5 73.6V80.5M456.5 70.5V78.6M457.5 65.0V75.0M458.5 66.5V71.7M459.5 62.0V70.6M460.5 58.7V70.7M461.5 62.8V73.0M462.5 70.2V78.5M463.5 68.1V83.6M464.5 81.3V88.5M465.5 86.8V92.4M466.5 90.5V99.7M467.5 96.6V108.7M468.5 104.8V110.2M469.5 101.4V108.5M470.5 99.1V104.5M471.5 94.4V101.3M472.5 91.5V97.0M473.5 86.1V94.7M474.5 81.4V92.7M475.5 79.3V86.8M476.5 72.8V85.4M477.5 70.2V81.5M478.5 73.7V82.8M479.5 70.1V80.1M480.5 67.7V77.0M481.5 69.4V81.1M482.5 75.1V81.4M483.5 79.1V85.3M484.5 83.2V90.4M485.5 86.3V93.1M486.5 90.1V99.8M487.5 95.0V101.8M488.5 98.7V106.7M489.5 104.1V112.9M490.5 109.2V119.4M491.5 114.3V125.4M492.5 118.2V124.0M493.5 121.6V128.4M494.5 126.0V137.5M495.5 134.0V146.8M496.5 139.1V148.4M497.5 146.0V155.9M498.5 151.4V162.3M499.5 155.7V172.5M500.5 168.7V192.0M501.5 181.4V195.6M502.5 191.0V211.2M503.5 205.5V220.9M504.5 217.8V239.2M505.5 231.1V242.5M506.5 221.2V236.6M507.5 218.8V226.8M508.5 218.5V232.5M509.5 220.1V234.6M510.5 227.2V243.8M511.5 219.5V243.1M512.5 235.0V256.8M513.5 244.5V265.3M514.5 253.0V264.9M515.5 262.1V270.2M516.5 265.4V272.1M517.5 270.4V282.5M518.5 279.9V289.9M519.5 279.3V296.1M520.5 290.7V295.6M521.5 287.2V293.6M522.5 282.7V290.7M523.5 281.8V287.4M524.5 277.2V286.2M525.5 274.0V281.2M526.5 273.9V281.8M527.5 277.0V283.8M528.5 281.7V289.1M529.5 285.1V291.6M530.5 288.8V296.9M531.5 293.2V300.3M532.5 297.5V303.8M533.5 296.3V302.8M534.5 291.6V299.4M535.5 286.9V293.7M536.5 284.5V290.3M537.5 287.8V297.8M538.5 296.0V306.3M539.5 304.4V314.7M540.5 312.3V324.4M541.5 320.6V327.5M542.5 320.8V336.6M543.5 318.6V326.5M544.5 318.0V327.2M545.5 317.5V326.8M546.5 317.6V325.8M547.5 317.6V322.8M548.5 317.8V323.9M549.5 317.7V326.1M550.5 319.1V330.0M551.5 314.6V328.2M552.5 317.5V330.5M553.5 323.8V330.2M554.5 324.1V335.4" fill="none" stroke="#00ff00" stroke-width="1" shape-rendering="crispEdges"/><line x1="139" y1="168" x2="423" y2="79.5" stroke="#0000ff" stroke-width="1.1" stroke-dasharray="3 4"/><path d="M3.0 73.5 L9.5 69.0 L9.5 78.0 Z" fill="#0000ff" stroke="#fff" stroke-width="1"/><path d="M421.0 79.5 L427.5 75.0 L427.5 84.0 Z" fill="#0000ff" stroke="#fff" stroke-width="1"/><path d="M133.5 167.0 H136.5 V164.5 L141.0 168.5 L136.5 172.5 V170.0 H133.5 Z" fill="#0000ff" stroke="#fff" stroke-width="2" paint-order="stroke" stroke-linejoin="miter"/><path d="M557 4 H565 L561 8 Z" fill="#7f8ea6"/><path d="M8 9.5 H15 L11.5 13.5 Z" fill="#fff"/><rect x="702" y="19.5" width="3" height="1" fill="#fff"/><rect x="702" y="56.5" width="3" height="1" fill="#fff"/><rect x="702" y="93.5" width="3" height="1" fill="#fff"/><rect x="702" y="130.5" width="3" height="1" fill="#fff"/><rect x="702" y="167.5" width="3" height="1" fill="#fff"/><rect x="702" y="204.5" width="3" height="1" fill="#fff"/><rect x="702" y="241.5" width="3" height="1" fill="#fff"/><rect x="702" y="278.5" width="3" height="1" fill="#fff"/><rect x="702" y="315.5" width="3" height="1" fill="#fff"/><rect x="702" y="352.5" width="3" height="1" fill="#fff"/><rect x="3" y="362" width="1" height="3" fill="#fff"/><rect x="67" y="362" width="1" height="3" fill="#fff"/><rect x="131" y="362" width="1" height="3" fill="#fff"/><rect x="195" y="362" width="1" height="3" fill="#fff"/><rect x="259" y="362" width="1" height="3" fill="#fff"/><rect x="323" y="362" width="1" height="3" fill="#fff"/><rect x="387" y="362" width="1" height="3" fill="#fff"/><rect x="451" y="362" width="1" height="3" fill="#fff"/><rect x="515" y="362" width="1" height="3" fill="#fff"/></svg>
<div class="abs" style="left:3px;top:3px;width:699px;height:359px;border:1px solid #fff"></div>
<span class="tx ax hd" style="left:19px;top:7px">EURUSD-R,M1&nbsp; 1.08470 1.08471 1.08469 1.08470</span>
<span class="tx lab" style="left:583px;top:7px">预言家Prophet3（晨露）</span>
<svg class="abs" style="left:684px;top:6px" width="13" height="13" viewBox="0 0 13 13"><circle cx="6.5" cy="6.5" r="5.4" fill="none" stroke="#fff" stroke-width="1"/><circle cx="4.6" cy="5" r="0.8" fill="#fff"/><circle cx="8.4" cy="5" r="0.8" fill="#fff"/><path d="M3.6 7.6 Q6.5 10.6 9.4 7.6" fill="none" stroke="#fff" stroke-width="1"/></svg>
<span class="tx ax" style="left:708px;top:15.0px">1.08690</span>
<span class="tx ax" style="left:708px;top:52.0px">1.08665</span>
<span class="tx ax" style="left:708px;top:89.0px">1.08640</span>
<span class="tx ax" style="left:708px;top:126.0px">1.08615</span>
<span class="tx ax" style="left:708px;top:163.0px">1.08590</span>
<span class="tx ax" style="left:708px;top:200.0px">1.08565</span>
<span class="tx ax" style="left:708px;top:237.0px">1.08540</span>
<span class="tx ax" style="left:708px;top:274.0px">1.08515</span>
<span class="tx ax" style="left:708px;top:311.0px">1.08490</span>
<span class="tx ax" style="left:708px;top:348.0px">1.08465</span>
<span class="tx ax cur" style="left:703px;top:341.0px;color:#008000">1.08470</span>
<span class="tx ax" style="left:3px;top:366px">21 Mar 2024</span>
<span class="tx ax" style="left:67px;top:366px">21 Mar 21:19</span>
<span class="tx ax" style="left:131px;top:366px">21 Mar 22:23</span>
<span class="tx ax" style="left:195px;top:366px">21 Mar 23:29</span>
<span class="tx ax" style="left:259px;top:366px">22 Mar 00:34</span>
<span class="tx ax" style="left:323px;top:366px">22 Mar 01:39</span>
<span class="tx ax" style="left:387px;top:366px">22 Mar 02:43</span>
<span class="tx ax" style="left:451px;top:366px">22 Mar 03:47</span>
<span class="tx ax" style="left:515px;top:366px">22 Mar 04:51</span>
<div class="btn b1" style="left:546px;top:116px;color:#a52a2a"><span class="cj">可做多中…</span></div>
<div class="btn b1" style="left:546px;top:151px;color:#008b8b"><span class="cj">可做空中…</span></div>
<div class="btn b2" style="left:546px;top:186px"><span class="cj">盈利平仓后停止</span><span class="hw">EA?</span></div>
<div class="btn b3" style="left:546px;top:221px"><span class="cj">总盈利</span><span class="hw">N</span><span class="cj">平仓</span></div>
<div class="btn ed" style="left:546px;top:256px"><span class="hw">100.00</span></div>
<div class="btn b3" style="left:546px;top:291px"><span class="cj">总亏损</span><span class="hw">N</span><span class="cj">平仓</span></div>
<div class="btn ed" style="left:546px;top:326px"><span class="hw">100.00</span></div></div>
<div class="win" style="left:769px;top:73px;width:764px;height:422px"><span class="wt">EURAUD-R,M1</span><svg class="abs" style="left:9px;top:10px" width="16" height="16" viewBox="0 0 16 16"><rect x="1" y="1.500" width="11" height="8" rx="1" fill="#fff" stroke="#4c8cf0" stroke-width="1.300"/><path d="M3 5.500 l1.500 -1.500 1.500 2 1.500 -2.500 2 2" stroke="#4c8cf0" stroke-width="0.900" fill="none"/><rect x="4" y="6.500" width="10.500" height="8" rx="1" fill="#fff" stroke="#4c8cf0" stroke-width="1.300"/><path d="M6 9.500 l1.500 2.500 1.500 -2.500 1.500 2.500 1.500 -1.500" stroke="#4c8cf0" stroke-width="0.900" fill="none"/></svg><svg class="abs" style="right:77px;top:9px" width="31" height="18" viewBox="0 0 31 18"><rect x="0.500" y="0.500" width="30" height="17" rx="2.500" fill="#d3deee" stroke="#8d9bb6"/><rect x="1.500" y="8.500" width="28" height="8" rx="1.500" fill="#bccbe0"/><rect x="1.500" y="13" width="28" height="3.500" rx="1.500" fill="#c6d3e6"/><rect x="1.500" y="1.500" width="28" height="15" rx="1.800" fill="none" stroke="#fff" stroke-opacity="0.550"/><rect x="10" y="9.200" width="10" height="4" rx="1" fill="#fff" stroke="#6e7990" stroke-width="0.900"/></svg><svg class="abs" style="right:43px;top:9px" width="31" height="18" viewBox="0 0 31 18"><rect x="0.500" y="0.500" width="30" height="17" rx="2.500" fill="#d3deee" stroke="#8d9bb6"/><rect x="1.500" y="8.500" width="28" height="8" rx="1.500" fill="#bccbe0"/><rect x="1.500" y="13" width="28" height="3.500" rx="1.500" fill="#c6d3e6"/><rect x="1.500" y="1.500" width="28" height="15" rx="1.800" fill="none" stroke="#fff" stroke-opacity="0.550"/><rect x="10.500" y="4.700" width="9.500" height="8" rx="1" fill="#fff" stroke="#6e7990" stroke-width="0.900"/><rect x="13.200" y="7.600" width="4.100" height="2.400" fill="#bccbe0" stroke="#6e7990" stroke-width="0.700"/></svg><svg class="abs" style="right:9px;top:9px" width="31" height="18" viewBox="0 0 31 18"><rect x="0.500" y="0.500" width="30" height="17" rx="2.500" fill="#d3deee" stroke="#8d9bb6"/><rect x="1.500" y="8.500" width="28" height="8" rx="1.500" fill="#bccbe0"/><rect x="1.500" y="13" width="28" height="3.500" rx="1.500" fill="#c6d3e6"/><rect x="1.500" y="1.500" width="28" height="15" rx="1.800" fill="none" stroke="#fff" stroke-opacity="0.550"/><path d="M11.500 5.600 l8 6.800 M19.500 5.600 l-8 6.800" stroke="#6e7990" stroke-width="4.600" fill="none" stroke-linecap="butt"/><path d="M11.500 5.600 l8 6.800 M19.500 5.600 l-8 6.800" stroke="#fff" stroke-width="2.900" fill="none"/></svg></div>
<div class="chart" id="c2" style="left:777px;top:104px;width:747px;height:381px;background:#a52a2a;box-shadow:-1px -1px 0 0.5px #6e686e, inset 0 1px 0 #6e686e, 1px 1px 0 0 #f4f8fc"><span class="tx pn" style="left:15.0px;top:179.0px"><span class="cj">【统计】</span><span class="hw">&nbsp;&nbsp;0.654</span></span>
<span class="tx pn" style="left:15.0px;top:197.0px"><span class="cj">最小手数</span><span class="hw">:&nbsp;0.01</span></span>
<span class="tx pn" style="left:121.8px;top:197.0px"><span class="cj">最小止损</span><span class="hw">:&nbsp;10.00</span></span>
<span class="tx pn" style="left:235.9px;top:197.0px"><span class="cj">点差</span><span class="hw">:&nbsp;9</span></span>
<span class="tx pn" style="left:15.0px;top:215.0px"><span class="cj">平台</span><span class="hw">:&nbsp;2024.03.22&nbsp;05:34</span></span>
<span class="tx pn" style="left:180.0px;top:215.0px"><span class="cj">北京</span><span class="hw">:&nbsp;10:34:45</span></span>
<span class="tx pn" style="left:15.0px;top:233.0px"><span class="hw">---------</span></span>
<span class="tx pn" style="left:15.0px;top:251.0px"><span class="cj">多单单数</span><span class="hw">:&nbsp;0</span></span>
<span class="tx pn" style="left:101.0px;top:251.0px"><span class="cj">多单手数</span><span class="hw">:&nbsp;0.00</span></span>
<span class="tx pn" style="left:207.8px;top:251.0px"><span class="cj">多单盈亏</span><span class="hw">:&nbsp;0.00</span></span>
<span class="tx pn" style="left:15.0px;top:269.0px"><span class="cj">空单单数</span><span class="hw">:&nbsp;0</span></span>
<span class="tx pn" style="left:101.0px;top:269.0px"><span class="cj">空单手数</span><span class="hw">:&nbsp;0.00</span></span>
<span class="tx pn" style="left:207.8px;top:269.0px"><span class="cj">空单盈亏</span><span class="hw">:&nbsp;0.00</span></span>
<span class="tx pn" style="left:15.0px;top:287.0px"><span class="hw">---------</span></span>
<span class="tx pn" style="left:15.0px;top:305.0px"><span class="cj">账户余额</span><span class="hw">:&nbsp;16820.47</span></span>
<span class="tx pn" style="left:149.0px;top:305.0px"><span class="cj">账户净值</span><span class="hw">:&nbsp;16820.47</span></span>
<span class="tx pn" style="left:15.0px;top:323.0px"><span class="cj">持仓单数</span><span class="hw">:&nbsp;0</span></span>
<span class="tx pn" style="left:101.0px;top:323.0px"><span class="cj">持仓手数</span><span class="hw">:&nbsp;0.00</span></span>
<span class="tx pn" style="left:207.8px;top:323.0px"><span class="cj">持仓盈亏</span><span class="hw">:&nbsp;0.00</span></span>
<div class="abs" style="left:3px;top:37.0px;width:698px;height:1px;background:#8492a6"></div>
<svg class="abs" style="left:0;top:0" width="747" height="382" viewBox="0 0 747 382"><path d="M3.5 269.6V281.1M4.5 269.3V277.9M5.5 269.5V278.4M6.5 269.6V278.6M7.5 271.4V288.2M8.5 276.7V288.8M9.5 281.0V288.7M10.5 278.1V288.5M11.5 277.1V286.4M12.5 274.5V286.1M13.5 274.6V280.2M14.5 274.1V286.2M15.5 280.9V288.9M16.5 282.9V290.1M17.5 286.2V293.6M18.5 288.2V296.7M19.5 289.5V296.3M20.5 281.7V295.8M21.5 283.5V294.4M22.5 280.9V286.5M23.5 278.9V292.0M24.5 277.9V290.4M25.5 277.6V285.2M26.5 277.8V290.2M27.5 286.0V297.1M28.5 289.6V301.5M29.5 292.0V301.9M30.5 287.6V301.2M31.5 274.2V296.8M32.5 283.9V299.6M33.5 280.5V299.3M34.5 287.1V298.2M35.5 272.8V290.5M36.5 275.9V287.1M37.5 274.6V287.8M38.5 273.3V289.8M39.5 272.4V288.1M40.5 272.5V286.1M41.5 273.3V286.1M42.5 272.6V280.2M43.5 272.6V281.7M44.5 268.7V286.6M45.5 277.9V286.9M46.5 276.8V296.4M47.5 281.3V287.2M48.5 279.6V296.0M49.5 290.6V297.0M50.5 284.5V296.8M51.5 283.4V292.8M52.5 281.7V290.0M53.5 280.0V290.2M54.5 280.5V288.0M55.5 278.7V287.3M56.5 279.3V287.5M57.5 275.9V290.2M58.5 276.2V292.6M59.5 277.6V291.8M60.5 283.1V291.1M61.5 283.1V296.7M62.5 281.5V294.9M63.5 287.9V297.2M64.5 287.4V298.5M65.5 293.1V298.9M66.5 290.9V298.5M67.5 284.0V298.5M68.5 282.3V297.4M69.5 284.9V291.5M70.5 280.0V290.2M71.5 280.3V285.1M72.5 279.7V284.2M73.5 279.6V290.3M74.5 284.4V293.8M75.5 280.0V292.2M76.5 283.3V289.1M77.5 273.3V294.8M78.5 291.0V297.7M79.5 276.7V294.3M80.5 273.2V300.3M81.5 267.3V292.9M82.5 260.6V275.9M83.5 263.3V276.1M84.5 261.0V276.2M85.5 269.3V286.6M86.5 270.4V286.4M87.5 267.5V286.2M88.5 264.5V281.8M89.5 263.2V283.2M90.5 263.1V279.4M91.5 263.4V280.6M92.5 269.2V282.3M93.5 275.5V284.9M94.5 279.3V284.4M95.5 278.9V290.9M96.5 266.4V283.6M97.5 274.2V287.3M98.5 264.1V284.0M99.5 264.1V275.0M100.5 259.5V276.7M101.5 258.6V273.0M102.5 262.0V270.8M103.5 257.6V270.3M104.5 257.3V269.9M105.5 257.0V273.2M106.5 259.4V272.3M107.5 257.2V267.7M108.5 258.1V277.6M109.5 265.1V277.4M110.5 260.4V285.2M111.5 267.4V279.5M112.5 270.1V289.3M113.5 274.0V289.2M114.5 275.7V288.9M115.5 276.6V282.4M116.5 273.4V288.0M117.5 272.7V282.7M118.5 273.4V285.9M119.5 271.9V284.6M120.5 272.4V284.4M121.5 271.5V282.7M122.5 271.4V279.4M123.5 271.0V281.1M124.5 272.1V281.5M125.5 271.3V285.6M126.5 270.7V283.9M127.5 270.3V295.2M128.5 270.4V286.1M129.5 270.0V288.3M130.5 262.6V290.1M131.5 275.0V302.4M132.5 292.2V299.2M133.5 291.9V299.4M134.5 286.2V302.0M135.5 283.8V302.2M136.5 283.8V294.2M137.5 286.9V295.5M138.5 275.1V289.5M139.5 265.3V291.6M140.5 280.3V284.6M141.5 280.9V296.4M142.5 280.2V292.6M143.5 284.9V294.9M144.5 285.4V300.6M145.5 293.6V300.1M146.5 295.8V306.8M147.5 288.7V302.1M148.5 292.2V308.3M149.5 297.8V307.8M150.5 289.1V304.1M151.5 289.9V305.7M152.5 290.0V302.1M153.5 283.9V308.5M154.5 287.6V296.3M155.5 285.2V299.2M156.5 286.1V297.5M157.5 285.4V299.1M158.5 284.8V294.5M159.5 291.4V296.7M160.5 293.0V302.8M161.5 291.6V306.0M162.5 291.1V305.9M163.5 298.3V305.8M164.5 299.0V306.2M165.5 290.1V306.1M166.5 298.8V306.0M167.5 287.2V304.5M168.5 290.5V302.4M169.5 286.6V300.5M170.5 286.3V296.9M171.5 286.5V299.2M172.5 290.0V300.6M173.5 290.0V298.7M174.5 288.3V299.8M175.5 291.5V303.8M176.5 290.0V303.8M177.5 294.4V304.4M178.5 294.3V304.4M179.5 286.1V303.7M180.5 290.6V301.9M181.5 290.4V296.4M182.5 289.9V295.2M183.5 289.4V296.3M184.5 288.1V295.4M185.5 287.8V299.7M186.5 287.6V295.9M187.5 292.0V297.0M188.5 291.4V298.1M189.5 292.6V298.4M190.5 289.2V303.6M191.5 294.1V302.8M192.5 291.9V305.6M193.5 296.9V306.2M194.5 293.4V303.4M195.5 294.7V306.1M196.5 293.1V302.4M197.5 296.7V305.8M198.5 291.2V300.6M199.5 289.8V302.8M200.5 291.6V299.7M201.5 293.2V301.1M202.5 287.8V297.1M203.5 287.8V296.3M204.5 287.4V301.5M205.5 287.9V297.7M206.5 291.9V300.2M207.5 294.2V308.1M208.5 293.0V307.8M209.5 299.9V308.1M210.5 300.4V308.5M211.5 296.5V304.9M212.5 291.0V307.2M213.5 293.6V301.2M214.5 292.3V298.2M215.5 293.4V303.0M216.5 287.3V296.2M217.5 287.0V294.4M218.5 288.3V301.2M219.5 285.4V295.0M220.5 284.9V295.7M221.5 285.0V294.0M222.5 283.8V293.7M223.5 284.9V294.5M224.5 284.0V299.7M225.5 285.3V296.1M226.5 281.4V298.6M227.5 295.8V308.5M228.5 300.3V311.8M229.5 299.2V311.4M230.5 288.1V305.8M231.5 286.1V302.0M232.5 266.5V294.4M233.5 281.7V290.3M234.5 285.1V306.2M235.5 302.1V320.5M236.5 311.6V321.6M237.5 308.7V315.9M238.5 304.9V314.9M239.5 304.5V312.4M240.5 301.8V307.4M241.5 297.2V309.3M242.5 285.7V302.2M243.5 298.6V312.5M244.5 303.7V327.0M245.5 313.0V323.0M246.5 318.2V339.6M247.5 323.5V340.1M248.5 329.5V346.0M249.5 340.0V353.9M250.5 328.7V346.1M251.5 321.7V346.1M252.5 309.6V331.8M253.5 292.7V319.2M254.5 292.1V303.9M255.5 283.1V294.8M256.5 273.9V294.3M257.5 286.0V319.8M258.5 302.5V330.2M259.5 320.3V339.4M260.5 331.0V350.1M261.5 332.4V344.9M262.5 324.1V341.5M263.5 317.5V330.8M264.5 327.9V348.4M265.5 331.2V347.1M266.5 331.8V349.5M267.5 329.6V348.1M268.5 316.4V336.6M269.5 313.6V329.3M270.5 303.2V317.7M271.5 298.4V309.6M272.5 297.1V307.9M273.5 301.6V307.0M274.5 302.9V307.9M275.5 302.6V309.4M276.5 303.8V319.6M277.5 305.0V310.8M278.5 298.7V306.7M279.5 296.6V303.1M280.5 293.1V299.3M281.5 288.7V298.8M282.5 286.0V293.4M283.5 290.6V297.8M284.5 292.9V298.7M285.5 296.2V303.4M286.5 295.9V304.1M287.5 287.3V300.5M288.5 283.4V294.0M289.5 277.3V286.1M290.5 277.1V284.5M291.5 276.5V285.5M292.5 277.8V283.0M293.5 276.6V283.0M294.5 276.5V280.8M295.5 276.9V282.4M296.5 276.1V282.4M297.5 271.7V282.5M298.5 277.5V289.3M299.5 277.4V284.3M300.5 278.8V283.8M301.5 278.1V284.3M302.5 278.7V285.4M303.5 279.4V284.7M304.5 280.3V285.9M305.5 279.8V286.3M306.5 279.7V286.9M307.5 280.3V285.9M308.5 280.3V286.5M309.5 280.6V287.8M310.5 283.2V290.5M311.5 285.2V292.4M312.5 285.9V294.8M313.5 287.9V293.8M314.5 290.2V295.7M315.5 288.0V296.4M316.5 284.4V290.5M317.5 279.7V290.6M318.5 278.5V287.6M319.5 275.1V283.1M320.5 274.9V280.5M321.5 271.3V282.1M322.5 270.9V284.6M323.5 271.2V276.6M324.5 271.4V277.4M325.5 272.7V277.3M326.5 272.4V279.2M327.5 272.8V278.2M328.5 272.8V280.6M329.5 275.2V281.3M330.5 277.2V282.3M331.5 277.3V283.7M332.5 277.7V284.1M333.5 278.8V284.3M334.5 280.2V285.0M335.5 280.0V285.8M336.5 281.3V287.8M337.5 280.9V286.9M338.5 280.4V287.8M339.5 285.0V292.7M340.5 283.3V292.9M341.5 282.6V292.3M342.5 275.6V292.3M343.5 278.9V288.9M344.5 281.8V288.1M345.5 277.9V289.6M346.5 276.5V285.5M347.5 274.7V283.6M348.5 272.5V279.1M349.5 273.1V278.7M350.5 273.1V281.1M351.5 272.8V282.0M352.5 274.0V278.5M353.5 274.6V286.6M354.5 275.2V284.2M355.5 279.6V290.0M356.5 279.6V285.4M357.5 279.8V285.8M358.5 282.7V287.0M359.5 278.9V287.9M360.5 279.8V288.5M361.5 280.1V288.7M362.5 280.6V285.6M363.5 281.2V290.0M364.5 282.3V290.9M365.5 286.6V294.8M366.5 287.1V294.5M367.5 286.2V296.5M368.5 289.4V297.4M369.5 290.2V297.3M370.5 286.3V297.3M371.5 286.2V296.0M372.5 284.8V295.0M373.5 286.6V297.0M374.5 280.6V294.2M375.5 282.4V293.4M376.5 277.4V287.9M377.5 279.8V287.3M378.5 277.2V284.3M379.5 276.6V286.0M380.5 278.5V285.9M381.5 279.4V290.7M382.5 280.8V289.1M383.5 278.3V286.2M384.5 283.4V291.3M385.5 283.6V293.1M386.5 286.0V294.7M387.5 282.5V296.0M388.5 285.4V296.2M389.5 286.9V295.8M390.5 289.4V295.7M391.5 279.5V295.9M392.5 286.2V294.9M393.5 286.6V295.1M394.5 284.2V292.2M395.5 283.0V292.4M396.5 282.2V289.6M397.5 282.4V287.8M398.5 282.7V288.9M399.5 281.0V289.2M400.5 281.2V287.8M401.5 279.5V294.7M402.5 278.4V283.7M403.5 277.5V285.1M404.5 279.9V285.1M405.5 276.7V285.0M406.5 276.3V284.0M407.5 274.2V283.9M408.5 276.9V280.2M409.5 276.8V282.8M410.5 276.3V283.9M411.5 276.8V283.4M412.5 278.6V284.6M413.5 278.3V285.2M414.5 279.2V285.4M415.5 278.2V285.3M416.5 278.6V285.6M417.5 281.1V286.9M418.5 279.5V285.7M419.5 280.3V288.1M420.5 280.8V291.5M421.5 282.5V287.9M422.5 283.5V287.7M423.5 284.2V294.5M424.5 286.1V296.8M425.5 286.6V292.3M426.5 287.9V295.9M427.5 290.0V298.5M428.5 291.0V299.7M429.5 291.5V298.3M430.5 292.7V301.4M431.5 293.2V300.0M432.5 295.9V302.8M433.5 294.7V303.4M434.5 295.2V300.2M435.5 296.6V304.0M436.5 296.8V305.7M437.5 297.6V307.1M438.5 298.7V307.8M439.5 300.6V307.8M440.5 300.9V308.3M441.5 300.4V308.3M442.5 302.5V307.8M443.5 299.5V308.7M444.5 296.6V304.0M445.5 295.5V305.3M446.5 293.9V306.1M447.5 293.5V303.7M448.5 290.8V300.0M449.5 293.7V302.1M450.5 287.7V297.5M451.5 287.2V298.6M452.5 287.4V294.0M453.5 287.4V296.9M454.5 284.0V293.9M455.5 287.9V294.5M456.5 284.3V300.0M457.5 291.2V298.6M458.5 296.5V308.4M459.5 296.2V304.5M460.5 297.9V308.2M461.5 297.7V308.6M462.5 296.2V308.6M463.5 303.1V307.3M464.5 293.0V305.7M465.5 292.6V304.9M466.5 292.9V303.2M467.5 292.4V308.8M468.5 292.5V307.5M469.5 292.1V310.5M470.5 295.6V310.3M471.5 303.7V314.6M472.5 307.4V313.4M473.5 310.0V316.5M474.5 305.8V318.5M475.5 314.5V319.6M476.5 310.9V317.6M477.5 312.3V320.5M478.5 313.3V320.9M479.5 313.3V320.9M480.5 313.8V320.8M481.5 312.7V320.5M482.5 313.1V319.3M483.5 310.9V317.4M484.5 308.2V317.2M485.5 307.8V314.1M486.5 306.5V316.2M487.5 306.8V312.8M488.5 307.0V312.4M489.5 305.2V312.7M490.5 302.8V309.4M491.5 299.5V306.1M492.5 299.4V306.4M493.5 298.6V307.6M494.5 302.0V305.7M495.5 298.4V304.6M496.5 298.0V304.8M497.5 295.1V304.8M498.5 292.2V310.2M499.5 290.1V303.8M500.5 271.0V296.1M501.5 254.3V280.6M502.5 208.4V256.2M503.5 207.7V236.7M504.5 210.1V227.2M505.5 207.5V230.2M506.5 216.5V243.0M507.5 214.6V244.0M508.5 228.4V246.1M509.5 227.4V246.0M510.5 227.3V244.4M511.5 211.9V231.4M512.5 210.0V223.0M513.5 198.7V218.2M514.5 179.6V206.3M515.5 182.7V195.9M516.5 170.9V199.3M517.5 152.7V179.8M518.5 153.4V166.6M519.5 142.8V155.4M520.5 143.2V155.8M521.5 148.5V158.6M522.5 146.3V160.1M523.5 154.5V161.7M524.5 150.3V159.8M525.5 140.1V160.2M526.5 135.7V150.9M527.5 123.3V152.7M528.5 124.6V136.3M529.5 98.4V130.9M530.5 91.1V113.0M531.5 83.9V104.1M532.5 87.8V105.2M533.5 94.5V108.0M534.5 101.8V115.0M535.5 109.8V118.8M536.5 97.6V115.1M537.5 97.1V108.6M538.5 87.1V99.5M539.5 79.3V105.8M540.5 72.4V84.6M541.5 63.6V75.8M542.5 48.9V65.7M543.5 36.5V53.7M544.5 24.0V42.2M545.5 21.8V32.2M546.5 30.2V43.5M547.5 38.0V69.7M548.5 46.2V59.2M549.5 43.0V51.5M550.5 34.3V45.1M551.5 37.4V57.9M552.5 41.8V54.8M553.5 50.4V62.0M554.5 59.6V73.5M555.5 56.9V71.0M556.5 51.3V62.4M557.5 36.8V54.3M558.5 36.3V47.4M559.5 33.3V40.1M560.5 38.3V47.1" fill="none" stroke="#00ff00" stroke-width="1" shape-rendering="crispEdges"/><line x1="169" y1="291" x2="250" y2="336" stroke="#0000ff" stroke-width="1.1" stroke-dasharray="3 4"/><line x1="252" y1="237" x2="514" y2="193" stroke="#0000ff" stroke-width="1.1" stroke-dasharray="3 4"/><path d="M248.0 337.5 L254.5 333.0 L254.5 342.0 Z" fill="#0000ff" stroke="#fff" stroke-width="1"/><path d="M512.0 192.5 L518.5 188.0 L518.5 197.0 Z" fill="#0000ff" stroke="#fff" stroke-width="1"/><path d="M163.5 289.0 H166.5 V286.5 L171.0 290.5 L166.5 294.5 V292.0 H163.5 Z" fill="#0000ff" stroke="#fff" stroke-width="2" paint-order="stroke" stroke-linejoin="miter"/><path d="M245.5 236.0 H248.5 V233.5 L253.0 237.5 L248.5 241.5 V239.0 H245.5 Z" fill="#0000ff" stroke="#fff" stroke-width="2" paint-order="stroke" stroke-linejoin="miter"/><path d="M556 4 H564 L560 8 Z" fill="#7f8ea6"/><path d="M8 9.5 H15 L11.5 13.5 Z" fill="#fff"/><rect x="702" y="21.5" width="3" height="1" fill="#fff"/><rect x="702" y="55.5" width="3" height="1" fill="#fff"/><rect x="702" y="89.0" width="3" height="1" fill="#fff"/><rect x="702" y="122.5" width="3" height="1" fill="#fff"/><rect x="702" y="156.5" width="3" height="1" fill="#fff"/><rect x="702" y="190.0" width="3" height="1" fill="#fff"/><rect x="702" y="223.5" width="3" height="1" fill="#fff"/><rect x="702" y="257.5" width="3" height="1" fill="#fff"/><rect x="702" y="291.0" width="3" height="1" fill="#fff"/><rect x="702" y="324.5" width="3" height="1" fill="#fff"/><rect x="702" y="358.5" width="3" height="1" fill="#fff"/><rect x="3" y="362" width="1" height="3" fill="#fff"/><rect x="67" y="362" width="1" height="3" fill="#fff"/><rect x="131" y="362" width="1" height="3" fill="#fff"/><rect x="195" y="362" width="1" height="3" fill="#fff"/><rect x="259" y="362" width="1" height="3" fill="#fff"/><rect x="323" y="362" width="1" height="3" fill="#fff"/><rect x="387" y="362" width="1" height="3" fill="#fff"/><rect x="451" y="362" width="1" height="3" fill="#fff"/><rect x="515" y="362" width="1" height="3" fill="#fff"/></svg>
<div class="abs" style="left:3px;top:3px;width:699px;height:359px;border:1px solid #fff"></div>
<span class="tx ax hd" style="left:19px;top:7px">EURAUD-R,M1&nbsp; 1.65910 1.65913 1.65901 1.65910</span>
<span class="tx lab" style="left:583px;top:7px">预言家Prophet3（晨露）</span>
<svg class="abs" style="left:684px;top:6px" width="13" height="13" viewBox="0 0 13 13"><circle cx="6.5" cy="6.5" r="5.4" fill="none" stroke="#fff" stroke-width="1"/><circle cx="4.6" cy="5" r="0.8" fill="#fff"/><circle cx="8.4" cy="5" r="0.8" fill="#fff"/><path d="M3.6 7.6 Q6.5 10.6 9.4 7.6" fill="none" stroke="#fff" stroke-width="1"/></svg>
<span class="tx ax" style="left:708px;top:17.0px">1.65950</span>
<span class="tx ax" style="left:708px;top:51.0px">1.65865</span>
<span class="tx ax" style="left:708px;top:84.5px">1.65780</span>
<span class="tx ax" style="left:708px;top:118.0px">1.65700</span>
<span class="tx ax" style="left:708px;top:152.0px">1.65615</span>
<span class="tx ax" style="left:708px;top:185.5px">1.65535</span>
<span class="tx ax" style="left:708px;top:219.0px">1.65450</span>
<span class="tx ax" style="left:708px;top:253.0px">1.65365</span>
<span class="tx ax" style="left:708px;top:286.5px">1.65285</span>
<span class="tx ax" style="left:708px;top:320.0px">1.65200</span>
<span class="tx ax" style="left:708px;top:354.0px">1.65115</span>
<span class="tx ax cur" style="left:703px;top:32.0px;color:#a52a2a">1.65910</span>
<span class="tx ax" style="left:3px;top:366px">21 Mar 2024</span>
<span class="tx ax" style="left:67px;top:366px">21 Mar 21:22</span>
<span class="tx ax" style="left:131px;top:366px">21 Mar 22:26</span>
<span class="tx ax" style="left:195px;top:366px">21 Mar 23:30</span>
<span class="tx ax" style="left:259px;top:366px">22 Mar 00:35</span>
<span class="tx ax" style="left:323px;top:366px">22 Mar 01:39</span>
<span class="tx ax" style="left:387px;top:366px">22 Mar 02:43</span>
<span class="tx ax" style="left:451px;top:366px">22 Mar 03:47</span>
<span class="tx ax" style="left:515px;top:366px">22 Mar 04:51</span>
<div class="btn b1" style="left:546px;top:116px;color:#a52a2a"><span class="cj">可做多中…</span></div>
<div class="btn b1" style="left:546px;top:151px;color:#008b8b"><span class="cj">可做空中…</span></div>
<div class="btn b2" style="left:546px;top:186px"><span class="cj">盈利平仓后停止</span><span class="hw">EA?</span></div>
<div class="btn b3" style="left:546px;top:221px"><span class="cj">总盈利</span><span class="hw">N</span><span class="cj">平仓</span></div>
<div class="btn ed" style="left:546px;top:256px"><span class="hw">100.00</span></div>
<div class="btn b3" style="left:546px;top:291px"><span class="cj">总亏损</span><span class="hw">N</span><span class="cj">平仓</span></div>
<div class="btn ed" style="left:546px;top:326px"><span class="hw">100.00</span></div></div>
<div class="win" style="left:3px;top:497px;width:764px;height:452px"><span class="wt">GBPUSD-R,M1</span><svg class="abs" style="left:9px;top:10px" width="16" height="16" viewBox="0 0 16 16"><rect x="1" y="1.500" width="11" height="8" rx="1" fill="#fff" stroke="#4c8cf0" stroke-width="1.300"/><path d="M3 5.500 l1.500 -1.500 1.500 2 1.500 -2.500 2 2" stroke="#4c8cf0" stroke-width="0.900" fill="none"/><rect x="4" y="6.500" width="10.500" height="8" rx="1" fill="#fff" stroke="#4c8cf0" stroke-width="1.300"/><path d="M6 9.500 l1.500 2.500 1.500 -2.500 1.500 2.500 1.500 -1.500" stroke="#4c8cf0" stroke-width="0.900" fill="none"/></svg><svg class="abs" style="right:77px;top:9px" width="31" height="18" viewBox="0 0 31 18"><rect x="0.500" y="0.500" width="30" height="17" rx="2.500" fill="#d3deee" stroke="#8d9bb6"/><rect x="1.500" y="8.500" width="28" height="8" rx="1.500" fill="#bccbe0"/><rect x="1.500" y="13" width="28" height="3.500" rx="1.500" fill="#c6d3e6"/><rect x="1.500" y="1.500" width="28" height="15" rx="1.800" fill="none" stroke="#fff" stroke-opacity="0.550"/><rect x="10" y="9.200" width="10" height="4" rx="1" fill="#fff" stroke="#6e7990" stroke-width="0.900"/></svg><svg class="abs" style="right:43px;top:9px" width="31" height="18" viewBox="0 0 31 18"><rect x="0.500" y="0.500" width="30" height="17" rx="2.500" fill="#d3deee" stroke="#8d9bb6"/><rect x="1.500" y="8.500" width="28" height="8" rx="1.500" fill="#bccbe0"/><rect x="1.500" y="13" width="28" height="3.500" rx="1.500" fill="#c6d3e6"/><rect x="1.500" y="1.500" width="28" height="15" rx="1.800" fill="none" stroke="#fff" stroke-opacity="0.550"/><rect x="10.500" y="4.700" width="9.500" height="8" rx="1" fill="#fff" stroke="#6e7990" stroke-width="0.900"/><rect x="13.200" y="7.600" width="4.100" height="2.400" fill="#bccbe0" stroke="#6e7990" stroke-width="0.700"/></svg><svg class="abs" style="right:9px;top:9px" width="31" height="18" viewBox="0 0 31 18"><rect x="0.500" y="0.500" width="30" height="17" rx="2.500" fill="#d3deee" stroke="#8d9bb6"/><rect x="1.500" y="8.500" width="28" height="8" rx="1.500" fill="#bccbe0"/><rect x="1.500" y="13" width="28" height="3.500" rx="1.500" fill="#c6d3e6"/><rect x="1.500" y="1.500" width="28" height="15" rx="1.800" fill="none" stroke="#fff" stroke-opacity="0.550"/><path d="M11.500 5.600 l8 6.800 M19.500 5.600 l-8 6.800" stroke="#6e7990" stroke-width="4.600" fill="none" stroke-linecap="butt"/><path d="M11.500 5.600 l8 6.800 M19.500 5.600 l-8 6.800" stroke="#fff" stroke-width="2.900" fill="none"/></svg></div>
<div class="chart" id="c3" style="left:11px;top:528px;width:747px;height:411px;background:#008000;box-shadow:-1px -1px 0 0.5px #6e686e, inset 0 1px 0 #6e686e, 1px 1px 0 0 #f4f8fc"><span class="tx pn" style="left:15.0px;top:208.0px"><span class="cj">【统计】</span><span class="hw">&nbsp;&nbsp;1.000</span></span>
<span class="tx pn" style="left:15.0px;top:226.0px"><span class="cj">最小手数</span><span class="hw">:&nbsp;0.01</span></span>
<span class="tx pn" style="left:121.8px;top:226.0px"><span class="cj">最小止损</span><span class="hw">:&nbsp;10.00</span></span>
<span class="tx pn" style="left:235.9px;top:226.0px"><span class="cj">点差</span><span class="hw">:&nbsp;5</span></span>
<span class="tx pn" style="left:15.0px;top:244.0px"><span class="cj">平台</span><span class="hw">:&nbsp;2024.03.22&nbsp;05:34</span></span>
<span class="tx pn" style="left:180.0px;top:244.0px"><span class="cj">北京</span><span class="hw">:&nbsp;10:34:45</span></span>
<span class="tx pn" style="left:15.0px;top:262.0px"><span class="hw">---------</span></span>
<span class="tx pn" style="left:15.0px;top:280.0px"><span class="cj">多单单数</span><span class="hw">:&nbsp;0</span></span>
<span class="tx pn" style="left:101.0px;top:280.0px"><span class="cj">多单手数</span><span class="hw">:&nbsp;0.00</span></span>
<span class="tx pn" style="left:207.8px;top:280.0px"><span class="cj">多单盈亏</span><span class="hw">:&nbsp;0.00</span></span>
<span class="tx pn" style="left:15.0px;top:298.0px"><span class="cj">空单单数</span><span class="hw">:&nbsp;0</span></span>
<span class="tx pn" style="left:101.0px;top:298.0px"><span class="cj">空单手数</span><span class="hw">:&nbsp;0.00</span></span>
<span class="tx pn" style="left:207.8px;top:298.0px"><span class="cj">空单盈亏</span><span class="hw">:&nbsp;0.00</span></span>
<span class="tx pn" style="left:15.0px;top:316.0px"><span class="hw">---------</span></span>
<span class="tx pn" style="left:15.0px;top:334.0px"><span class="cj">账户余额</span><span class="hw">:&nbsp;16820.47</span></span>
<span class="tx pn" style="left:149.0px;top:334.0px"><span class="cj">账户净值</span><span class="hw">:&nbsp;16820.47</span></span>
<span class="tx pn" style="left:15.0px;top:352.0px"><span class="cj">持仓单数</span><span class="hw">:&nbsp;0</span></span>
<span class="tx pn" style="left:101.0px;top:352.0px"><span class="cj">持仓手数</span><span class="hw">:&nbsp;0.00</span></span>
<span class="tx pn" style="left:207.8px;top:352.0px"><span class="cj">持仓盈亏</span><span class="hw">:&nbsp;0.00</span></span>
<div class="abs" style="left:3px;top:339.0px;width:698px;height:1px;background:#8492a6"></div>
<svg class="abs" style="left:0;top:0" width="747" height="411" viewBox="0 0 747 411"><path d="M3.5 80.9V91.6M4.5 83.0V97.0M5.5 90.7V105.7M6.5 90.2V98.6M7.5 82.1V95.3M8.5 72.6V87.3M9.5 73.4V83.6M10.5 77.5V87.9M11.5 85.5V100.6M12.5 94.4V109.2M13.5 104.4V117.1M14.5 114.6V127.8M15.5 122.2V135.5M16.5 132.8V150.4M17.5 144.4V156.7M18.5 153.2V166.2M19.5 158.2V166.9M20.5 157.5V164.1M21.5 155.5V164.4M22.5 156.5V165.1M23.5 154.8V161.2M24.5 158.5V169.4M25.5 167.6V178.8M26.5 176.1V189.6M27.5 186.3V198.1M28.5 195.9V207.3M29.5 203.5V211.7M30.5 208.1V217.4M31.5 208.0V215.4M32.5 210.1V218.0M33.5 214.1V222.0M34.5 219.1V226.0M35.5 223.2V232.7M36.5 229.1V241.1M37.5 236.4V246.3M38.5 243.9V253.2M39.5 250.4V260.2M40.5 247.9V256.1M41.5 237.7V250.4M42.5 235.2V244.5M43.5 230.5V239.8M44.5 228.0V238.1M45.5 233.9V253.1M46.5 242.6V252.9M47.5 251.0V261.5M48.5 258.3V268.3M49.5 257.9V266.4M50.5 252.2V260.8M51.5 245.2V254.2M52.5 239.2V248.5M53.5 231.7V241.1M54.5 228.8V238.5M55.5 227.0V234.6M56.5 227.6V234.0M57.5 219.6V229.5M58.5 220.9V229.8M59.5 217.8V223.9M60.5 214.9V225.2M61.5 213.2V223.5M62.5 205.7V219.0M63.5 210.4V216.8M64.5 206.6V214.3M65.5 204.2V211.3M66.5 203.7V209.4M67.5 196.2V209.9M68.5 195.8V205.3M69.5 195.7V202.0M70.5 190.6V198.3M71.5 188.2V194.4M72.5 184.5V191.3M73.5 179.2V186.5M74.5 174.1V183.1M75.5 173.9V179.9M76.5 172.2V177.9M77.5 168.6V176.2M78.5 161.3V175.0M79.5 160.2V171.6M80.5 161.1V169.8M81.5 155.2V168.8M82.5 154.4V163.3M83.5 156.4V167.4M84.5 162.3V173.6M85.5 166.7V173.9M86.5 172.0V181.1M87.5 179.3V189.6M88.5 181.0V192.1M89.5 186.7V192.7M90.5 187.9V195.6M91.5 190.1V195.5M92.5 190.7V198.4M93.5 189.7V195.4M94.5 188.9V198.5M95.5 184.3V200.8M96.5 183.6V190.0M97.5 180.4V188.7M98.5 180.5V185.6M99.5 183.8V190.5M100.5 187.6V195.1M101.5 192.6V201.9M102.5 198.5V209.3M103.5 203.6V209.9M104.5 207.9V214.5M105.5 209.6V214.1M106.5 207.8V212.8M107.5 204.8V213.4M108.5 202.8V211.8M109.5 200.9V211.9M110.5 202.4V212.9M111.5 203.1V213.2M112.5 202.9V211.6M113.5 199.8V218.8M114.5 212.9V222.6M115.5 218.5V229.1M116.5 222.2V231.9M117.5 223.9V232.9M118.5 224.7V231.3M119.5 225.1V235.9M120.5 226.4V233.9M121.5 229.0V235.2M122.5 230.2V237.3M123.5 233.3V239.3M124.5 234.0V246.1M125.5 236.7V250.5M126.5 239.5V248.9M127.5 242.9V256.5M128.5 242.6V252.2M129.5 247.5V265.7M130.5 253.7V263.3M131.5 256.1V268.5M132.5 254.1V276.0M133.5 265.2V283.6M134.5 265.4V283.5M135.5 275.2V283.8M136.5 271.8V277.7M137.5 264.8V275.4M138.5 256.8V269.4M139.5 250.6V261.9M140.5 251.7V261.6M141.5 247.4V255.2M142.5 249.7V256.6M143.5 250.2V257.4M144.5 244.4V256.4M145.5 239.2V250.0M146.5 245.4V254.2M147.5 250.3V262.4M148.5 251.9V262.6M149.5 256.9V265.9M150.5 257.0V265.6M151.5 252.8V261.9M152.5 249.6V260.0M153.5 245.3V256.2M154.5 245.4V254.8M155.5 245.0V250.6M156.5 241.8V247.8M157.5 241.1V248.4M158.5 243.1V253.8M159.5 250.0V261.0M160.5 255.7V264.5M161.5 261.4V268.5M162.5 266.6V282.0M163.5 267.2V278.3M164.5 274.0V283.9M165.5 276.7V283.2M166.5 276.8V286.7M167.5 280.4V288.7M168.5 284.2V290.8M169.5 285.6V294.2M170.5 284.9V296.1M171.5 289.6V297.2M172.5 292.0V298.4M173.5 288.6V298.6M174.5 290.2V296.3M175.5 285.2V292.3M176.5 279.7V287.8M177.5 276.0V283.1M178.5 268.8V278.5M179.5 271.0V277.7M180.5 268.7V290.2M181.5 269.4V275.8M182.5 266.8V273.2M183.5 266.0V271.5M184.5 263.3V270.0M185.5 265.2V270.7M186.5 267.6V272.7M187.5 267.4V275.9M188.5 270.9V277.4M189.5 273.9V280.8M190.5 277.0V282.4M191.5 276.1V284.3M192.5 272.8V280.3M193.5 269.9V278.9M194.5 266.5V274.8M195.5 262.1V269.5M196.5 260.5V266.6M197.5 255.3V262.4M198.5 255.8V262.4M199.5 254.7V261.1M200.5 252.8V259.8M201.5 253.9V259.7M202.5 253.3V259.3M203.5 252.9V258.9M204.5 251.9V259.6M205.5 250.6V259.1M206.5 251.2V258.9M207.5 250.9V259.0M208.5 254.1V259.0M209.5 255.7V260.9M210.5 256.8V263.0M211.5 259.8V267.4M212.5 261.5V267.1M213.5 263.7V269.4M214.5 263.4V280.8M215.5 265.7V272.4M216.5 269.4V277.8M217.5 265.5V272.0M218.5 260.0V267.4M219.5 254.2V261.8M220.5 246.9V256.4M221.5 239.6V249.8M222.5 237.9V245.0M223.5 232.2V239.7M224.5 226.5V237.5M225.5 224.2V235.0M226.5 217.5V233.7M227.5 216.4V225.5M228.5 208.1V221.1M229.5 210.3V219.7M230.5 206.4V230.5M231.5 219.0V240.9M232.5 226.3V245.1M233.5 240.3V265.8M234.5 252.5V266.0M235.5 240.3V266.6M236.5 225.0V249.0M237.5 225.5V237.0M238.5 225.5V232.7M239.5 228.6V242.1M240.5 225.6V245.1M241.5 228.0V246.6M242.5 229.6V248.3M243.5 231.0V249.4M244.5 237.6V249.3M245.5 235.7V246.8M246.5 236.1V243.0M247.5 227.0V245.9M248.5 223.4V242.5M249.5 220.2V244.9M250.5 221.6V242.5M251.5 215.0V239.5M252.5 219.7V230.6M253.5 212.4V235.5M254.5 215.1V228.6M255.5 211.9V233.2M256.5 212.7V252.9M257.5 232.4V253.8M258.5 242.7V256.8M259.5 245.2V255.3M260.5 241.5V252.7M261.5 237.7V250.8M262.5 224.3V239.8M263.5 228.2V242.5M264.5 226.7V235.9M265.5 225.9V237.3M266.5 222.6V235.6M267.5 217.9V232.9M268.5 216.3V232.6M269.5 215.0V229.3M270.5 215.1V225.3M271.5 214.5V230.9M272.5 212.4V229.1M273.5 212.7V228.3M274.5 212.2V229.0M275.5 212.2V226.2M276.5 212.3V237.7M277.5 217.5V227.7M278.5 220.5V239.6M279.5 217.2V230.6M280.5 218.8V231.7M281.5 222.6V246.9M282.5 225.9V247.5M283.5 219.1V247.0M284.5 233.1V247.1M285.5 233.2V252.2M286.5 232.2V262.9M287.5 232.0V239.3M288.5 230.7V245.7M289.5 230.2V243.0M290.5 232.6V239.0M291.5 231.6V240.2M292.5 232.6V240.2M293.5 232.2V239.8M294.5 231.6V237.7M295.5 232.4V237.3M296.5 232.2V237.7M297.5 232.3V238.7M298.5 232.2V238.7M299.5 230.9V237.5M300.5 232.9V239.3M301.5 224.5V237.4M302.5 222.3V234.0M303.5 219.8V235.1M304.5 218.3V231.6M305.5 205.0V227.6M306.5 206.3V225.7M307.5 205.0V213.2M308.5 205.9V216.4M309.5 207.9V216.5M310.5 206.4V217.9M311.5 208.0V222.4M312.5 214.5V222.8M313.5 217.4V222.9M314.5 214.3V223.0M315.5 213.3V222.8M316.5 214.6V222.5M317.5 215.6V232.6M318.5 210.5V220.7M319.5 209.2V219.5M320.5 205.8V218.5M321.5 207.4V216.6M322.5 206.9V216.9M323.5 208.6V215.6M324.5 206.6V221.8M325.5 206.9V219.4M326.5 207.0V215.9M327.5 208.0V220.3M328.5 210.1V221.7M329.5 212.3V227.1M330.5 213.9V226.3M331.5 218.9V226.7M332.5 219.7V227.1M333.5 220.2V227.2M334.5 220.8V226.5M335.5 219.1V226.7M336.5 218.9V225.9M337.5 218.6V231.5M338.5 220.5V225.7M339.5 218.3V225.4M340.5 217.5V225.4M341.5 217.5V226.4M342.5 217.8V224.9M343.5 217.9V225.7M344.5 219.0V224.5M345.5 220.0V235.4M346.5 222.8V239.1M347.5 226.0V235.2M348.5 227.2V237.2M349.5 232.4V244.2M350.5 238.6V244.8M351.5 231.5V242.7M352.5 229.2V241.0M353.5 218.7V233.1M354.5 215.5V225.7M355.5 215.9V221.1M356.5 216.1V226.6M357.5 216.2V220.2M358.5 216.1V219.5M359.5 216.1V221.7M360.5 215.8V221.2M361.5 216.0V218.2M362.5 216.1V221.2M363.5 216.1V221.7M364.5 215.4V221.3M365.5 215.3V220.5M366.5 211.2V220.7M367.5 217.1V221.8M368.5 211.0V219.8M369.5 208.6V216.3M370.5 204.4V213.8M371.5 195.9V208.1M372.5 196.5V203.3M373.5 193.2V200.3M374.5 192.6V199.6M375.5 184.8V197.6M376.5 190.1V196.5M377.5 188.9V196.7M378.5 190.6V197.0M379.5 188.9V196.2M380.5 180.4V195.4M381.5 185.5V195.9M382.5 185.3V191.9M383.5 183.4V190.2M384.5 181.3V187.6M385.5 178.3V185.1M386.5 178.1V184.1M387.5 175.3V180.8M388.5 173.4V178.9M389.5 170.7V177.2M390.5 161.5V173.5M391.5 161.2V175.7M392.5 155.2V175.5M393.5 155.1V172.6M394.5 155.6V164.4M395.5 155.5V162.6M396.5 159.6V170.7M397.5 159.7V172.9M398.5 169.0V183.6M399.5 168.3V185.6M400.5 178.5V189.4M401.5 185.1V193.6M402.5 189.9V197.2M403.5 188.7V196.4M404.5 189.6V197.9M405.5 182.7V191.9M406.5 177.7V194.9M407.5 173.3V183.8M408.5 170.6V185.1M409.5 169.9V183.8M410.5 170.6V177.5M411.5 168.5V173.1M412.5 164.2V174.5M413.5 160.4V171.3M414.5 156.1V170.3M415.5 153.6V168.6M416.5 157.3V165.6M417.5 152.3V160.7M418.5 146.4V154.7M419.5 142.6V152.5M420.5 137.9V144.6M421.5 135.6V140.8M422.5 128.9V140.2M423.5 127.5V136.0M424.5 123.0V132.9M425.5 118.9V127.1M426.5 113.7V121.4M427.5 110.6V120.0M428.5 105.4V112.8M429.5 101.0V109.4M430.5 99.3V104.9M431.5 89.6V101.2M432.5 88.2V96.7M433.5 82.7V91.7M434.5 79.8V85.5M435.5 74.8V83.7M436.5 68.8V79.2M437.5 64.8V73.4M438.5 60.4V74.0M439.5 62.2V68.4M440.5 60.5V68.0M441.5 55.1V68.0M442.5 52.5V62.6M443.5 53.2V59.7M444.5 53.9V61.5M445.5 55.3V65.6M446.5 59.2V66.5M447.5 60.9V68.2M448.5 63.7V69.3M449.5 65.0V70.4M450.5 65.4V74.4M451.5 69.7V75.2M452.5 67.3V72.6M453.5 62.7V69.7M454.5 57.9V65.9M455.5 54.5V62.8M456.5 49.4V61.2M457.5 44.8V54.5M458.5 39.1V49.0M459.5 33.5V43.7M460.5 32.5V38.7M461.5 30.7V42.3M462.5 36.0V45.8M463.5 42.9V50.4M464.5 48.7V57.3M465.5 55.5V64.3M466.5 61.5V68.8M467.5 65.8V74.8M468.5 69.6V77.0M469.5 66.4V73.2M470.5 61.5V69.1M471.5 56.5V65.3M472.5 53.7V60.3M473.5 49.3V56.7M474.5 45.1V54.4M475.5 39.8V47.7M476.5 36.6V43.4M477.5 33.9V40.0M478.5 31.3V37.5M479.5 26.1V33.8M480.5 23.2V29.7M481.5 21.8V27.9M482.5 24.9V36.9M483.5 33.6V41.0M484.5 38.9V50.0M485.5 47.6V63.1M486.5 56.5V63.8M487.5 61.2V70.9M488.5 62.7V74.4M489.5 69.5V79.3M490.5 75.1V86.0M491.5 80.6V103.2M492.5 85.0V96.1M493.5 84.9V105.8M494.5 94.8V116.7M495.5 105.7V113.9M496.5 111.0V118.8M497.5 116.6V126.3M498.5 122.9V130.6M499.5 124.7V146.0M500.5 129.0V144.0M501.5 135.8V161.6M502.5 157.3V178.5M503.5 176.2V200.8M504.5 189.7V204.8M505.5 177.2V205.0M506.5 185.5V198.3M507.5 176.5V192.3M508.5 173.6V188.3M509.5 170.0V178.6M510.5 175.5V188.9M511.5 185.9V210.6M512.5 196.8V208.8M513.5 205.5V219.1M514.5 216.1V228.4M515.5 225.6V238.9M516.5 234.0V249.7M517.5 247.6V259.9M518.5 258.1V275.1M519.5 271.2V290.7M520.5 283.8V295.2M521.5 284.4V300.0M522.5 277.2V287.8M523.5 274.8V283.7M524.5 266.0V290.2M525.5 270.5V281.2M526.5 262.8V272.9M527.5 262.8V268.7M528.5 266.8V278.7M529.5 265.5V301.9M530.5 280.2V301.2M531.5 298.6V327.4M532.5 314.8V327.5M533.5 314.8V327.9M534.5 307.7V319.4M535.5 300.3V315.9M536.5 298.8V315.5M537.5 299.0V305.9M538.5 300.0V319.6M539.5 317.8V333.2M540.5 329.2V352.2M541.5 344.8V355.6M542.5 349.4V368.4M543.5 359.5V372.1M544.5 353.2V371.9M545.5 350.8V368.2M546.5 337.7V356.6M547.5 333.2V354.3M548.5 334.6V359.5M549.5 329.1V344.5M550.5 328.7V337.5M551.5 325.1V334.5M552.5 317.6V329.5M553.5 317.3V326.1M554.5 315.1V320.5" fill="none" stroke="#00ff00" stroke-width="1" shape-rendering="crispEdges"/><line x1="58" y1="222" x2="74" y2="179" stroke="#0000ff" stroke-width="1.1" stroke-dasharray="3 4"/><line x1="142" y1="246" x2="171" y2="294" stroke="#0000ff" stroke-width="1.1" stroke-dasharray="3 4"/><line x1="182" y1="268" x2="223" y2="235" stroke="#0000ff" stroke-width="1.1" stroke-dasharray="3 4"/><path d="M3.0 85.0 L9.5 80.5 L9.5 89.5 Z" fill="#0000ff" stroke="#fff" stroke-width="1"/><path d="M71.0 176.0 L77.5 171.5 L77.5 180.5 Z" fill="#0000ff" stroke="#fff" stroke-width="1"/><path d="M168.0 296.0 L174.5 291.5 L174.5 300.5 Z" fill="#0000ff" stroke="#fff" stroke-width="1"/><path d="M221.0 234.0 L227.5 229.5 L227.5 238.5 Z" fill="#0000ff" stroke="#fff" stroke-width="1"/><path d="M52.5 222.5 H55.5 V220.0 L60.0 224.0 L55.5 228.0 V225.5 H52.5 Z" fill="#0000ff" stroke="#fff" stroke-width="2" paint-order="stroke" stroke-linejoin="miter"/><path d="M136.5 242.5 H139.5 V240.0 L144.0 244.0 L139.5 248.0 V245.5 H136.5 Z" fill="#0000ff" stroke="#fff" stroke-width="2" paint-order="stroke" stroke-linejoin="miter"/><path d="M176.5 268.5 H179.5 V266.0 L184.0 270.0 L179.5 274.0 V271.5 H176.5 Z" fill="#0000ff" stroke="#fff" stroke-width="2" paint-order="stroke" stroke-linejoin="miter"/><path d="M557 4 H565 L561 8 Z" fill="#7f8ea6"/><path d="M8 9.5 H15 L11.5 13.5 Z" fill="#fff"/><rect x="702" y="20.5" width="3" height="1" fill="#fff"/><rect x="702" y="53.5" width="3" height="1" fill="#fff"/><rect x="702" y="86.5" width="3" height="1" fill="#fff"/><rect x="702" y="119.5" width="3" height="1" fill="#fff"/><rect x="702" y="152.5" width="3" height="1" fill="#fff"/><rect x="702" y="185.5" width="3" height="1" fill="#fff"/><rect x="702" y="218.5" width="3" height="1" fill="#fff"/><rect x="702" y="251.5" width="3" height="1" fill="#fff"/><rect x="702" y="284.5" width="3" height="1" fill="#fff"/><rect x="702" y="317.5" width="3" height="1" fill="#fff"/><rect x="702" y="350.5" width="3" height="1" fill="#fff"/><rect x="702" y="383.5" width="3" height="1" fill="#fff"/><rect x="3" y="391" width="1" height="3" fill="#fff"/><rect x="67" y="391" width="1" height="3" fill="#fff"/><rect x="131" y="391" width="1" height="3" fill="#fff"/><rect x="195" y="391" width="1" height="3" fill="#fff"/><rect x="259" y="391" width="1" height="3" fill="#fff"/><rect x="323" y="391" width="1" height="3" fill="#fff"/><rect x="387" y="391" width="1" height="3" fill="#fff"/><rect x="451" y="391" width="1" height="3" fill="#fff"/><rect x="515" y="391" width="1" height="3" fill="#fff"/></svg>
<div class="abs" style="left:3px;top:3px;width:699px;height:388px;border:1px solid #fff"></div>
<span class="tx ax hd" style="left:19px;top:7px">GBPUSD-R,M1&nbsp; 1.26465 1.26472 1.26464 1.26466</span>
<span class="tx lab" style="left:583px;top:7px">预言家Prophet3（晨露）</span>
<svg class="abs" style="left:684px;top:6px" width="13" height="13" viewBox="0 0 13 13"><circle cx="6.5" cy="6.5" r="5.4" fill="none" stroke="#fff" stroke-width="1"/><circle cx="4.6" cy="5" r="0.8" fill="#fff"/><circle cx="8.4" cy="5" r="0.8" fill="#fff"/><path d="M3.6 7.6 Q6.5 10.6 9.4 7.6" fill="none" stroke="#fff" stroke-width="1"/></svg>
<span class="tx ax" style="left:708px;top:16.0px">1.26755</span>
<span class="tx ax" style="left:708px;top:49.0px">1.26725</span>
<span class="tx ax" style="left:708px;top:82.0px">1.26695</span>
<span class="tx ax" style="left:708px;top:115.0px">1.26665</span>
<span class="tx ax" style="left:708px;top:148.0px">1.26635</span>
<span class="tx ax" style="left:708px;top:181.0px">1.26605</span>
<span class="tx ax" style="left:708px;top:214.0px">1.26575</span>
<span class="tx ax" style="left:708px;top:247.0px">1.26545</span>
<span class="tx ax" style="left:708px;top:280.0px">1.26515</span>
<span class="tx ax" style="left:708px;top:313.0px">1.26485</span>
<span class="tx ax" style="left:708px;top:346.0px">1.26455</span>
<span class="tx ax" style="left:708px;top:379.0px">1.26425</span>
<span class="tx ax cur" style="left:703px;top:334.0px;color:#008000">1.26466</span>
<span class="tx ax" style="left:3px;top:395px">21 Mar 2024</span>
<span class="tx ax" style="left:67px;top:395px">21 Mar 21:17</span>
<span class="tx ax" style="left:131px;top:395px">21 Mar 22:21</span>
<span class="tx ax" style="left:195px;top:395px">21 Mar 23:26</span>
<span class="tx ax" style="left:259px;top:395px">22 Mar 00:33</span>
<span class="tx ax" style="left:323px;top:395px">22 Mar 01:38</span>
<span class="tx ax" style="left:387px;top:395px">22 Mar 02:43</span>
<span class="tx ax" style="left:451px;top:395px">22 Mar 03:47</span>
<span class="tx ax" style="left:515px;top:395px">22 Mar 04:51</span>
<div class="btn b1" style="left:546px;top:145px;color:#a52a2a"><span class="cj">可做多中…</span></div>
<div class="btn b1" style="left:546px;top:180px;color:#008b8b"><span class="cj">可做空中…</span></div>
<div class="btn b2" style="left:546px;top:215px"><span class="cj">盈利平仓后停止</span><span class="hw">EA?</span></div>
<div class="btn b3" style="left:546px;top:250px"><span class="cj">总盈利</span><span class="hw">N</span><span class="cj">平仓</span></div>
<div class="btn ed" style="left:546px;top:285px"><span class="hw">100.00</span></div>
<div class="btn b3" style="left:546px;top:320px"><span class="cj">总亏损</span><span class="hw">N</span><span class="cj">平仓</span></div>
<div class="btn ed" style="left:546px;top:355px"><span class="hw">100.00</span></div></div>
<div class="win act" style="left:769px;top:497px;width:764px;height:452px"><span class="wt">GBPCAD-R,M1</span><svg class="abs" style="left:9px;top:10px" width="16" height="16" viewBox="0 0 16 16"><rect x="1" y="1.500" width="11" height="8" rx="1" fill="#fff" stroke="#4c8cf0" stroke-width="1.300"/><path d="M3 5.500 l1.500 -1.500 1.500 2 1.500 -2.500 2 2" stroke="#4c8cf0" stroke-width="0.900" fill="none"/><rect x="4" y="6.500" width="10.500" height="8" rx="1" fill="#fff" stroke="#4c8cf0" stroke-width="1.300"/><path d="M6 9.500 l1.500 2.500 1.500 -2.500 1.500 2.500 1.500 -1.500" stroke="#4c8cf0" stroke-width="0.900" fill="none"/></svg><svg class="abs" style="right:77px;top:9px" width="31" height="18" viewBox="0 0 31 18"><rect x="0.500" y="0.500" width="30" height="17" rx="2.500" fill="#c0d2ea" stroke="#55627c"/><rect x="1.500" y="8.500" width="28" height="8" rx="1.500" fill="#9db6d6"/><rect x="1.500" y="13" width="28" height="3.500" rx="1.500" fill="#a9c0de"/><rect x="1.500" y="1.500" width="28" height="15" rx="1.800" fill="none" stroke="#fff" stroke-opacity="0.550"/><rect x="10" y="9.200" width="10" height="4" rx="1" fill="#fff" stroke="#4a5468" stroke-width="0.900"/></svg><svg class="abs" style="right:43px;top:9px" width="31" height="18" viewBox="0 0 31 18"><rect x="0.500" y="0.500" width="30" height="17" rx="2.500" fill="#c0d2ea" stroke="#55627c"/><rect x="1.500" y="8.500" width="28" height="8" rx="1.500" fill="#9db6d6"/><rect x="1.500" y="13" width="28" height="3.500" rx="1.500" fill="#a9c0de"/><rect x="1.500" y="1.500" width="28" height="15" rx="1.800" fill="none" stroke="#fff" stroke-opacity="0.550"/><rect x="10.500" y="4.700" width="9.500" height="8" rx="1" fill="#fff" stroke="#4a5468" stroke-width="0.900"/><rect x="13.200" y="7.600" width="4.100" height="2.400" fill="#9db6d6" stroke="#4a5468" stroke-width="0.700"/></svg><svg class="abs" style="right:9px;top:9px" width="31" height="18" viewBox="0 0 31 18"><rect x="0.500" y="0.500" width="30" height="17" rx="2.500" fill="#eaa596" stroke="#5a1422"/><rect x="1.500" y="8.500" width="28" height="8" rx="1.500" fill="#c2432a"/><rect x="1.500" y="13" width="28" height="3.500" rx="1.500" fill="#d47a62"/><rect x="1.500" y="1.500" width="28" height="15" rx="1.800" fill="none" stroke="#fff" stroke-opacity="0.550"/><path d="M11.500 5.600 l8 6.800 M19.500 5.600 l-8 6.800" stroke="#5e2626" stroke-width="4.600" fill="none" stroke-linecap="butt"/><path d="M11.500 5.600 l8 6.800 M19.500 5.600 l-8 6.800" stroke="#fff" stroke-width="2.900" fill="none"/></svg></div>
<div class="chart" id="c4" style="left:777px;top:528px;width:747px;height:411px;background:#000000;box-shadow:-1px -1px 0 0.5px #6e686e, inset 0 1px 0 #6e686e, 1px 1px 0 0 #f4f8fc"><span class="tx pn" style="left:15.0px;top:208.0px"><span class="cj">【统计】</span><span class="hw">&nbsp;&nbsp;0.738</span></span>
<span class="tx pn" style="left:15.0px;top:226.0px"><span class="cj">最小手数</span><span class="hw">:&nbsp;0.01</span></span>
<span class="tx pn" style="left:121.8px;top:226.0px"><span class="cj">最小止损</span><span class="hw">:&nbsp;10.00</span></span>
<span class="tx pn" style="left:235.9px;top:226.0px"><span class="cj">点差</span><span class="hw">:&nbsp;9</span></span>
<span class="tx pn" style="left:15.0px;top:244.0px"><span class="cj">平台</span><span class="hw">:&nbsp;2024.03.22&nbsp;05:34</span></span>
<span class="tx pn" style="left:180.0px;top:244.0px"><span class="cj">北京</span><span class="hw">:&nbsp;10:34:45</span></span>
<span class="tx pn" style="left:15.0px;top:262.0px"><span class="hw">---------</span></span>
<span class="tx pn" style="left:15.0px;top:280.0px"><span class="cj">多单单数</span><span class="hw">:&nbsp;0</span></span>
<span class="tx pn" style="left:101.0px;top:280.0px"><span class="cj">多单手数</span><span class="hw">:&nbsp;0.00</span></span>
<span class="tx pn" style="left:207.8px;top:280.0px"><span class="cj">多单盈亏</span><span class="hw">:&nbsp;0.00</span></span>
<span class="tx pn" style="left:15.0px;top:298.0px"><span class="cj">空单单数</span><span class="hw">:&nbsp;0</span></span>
<span class="tx pn" style="left:101.0px;top:298.0px"><span class="cj">空单手数</span><span class="hw">:&nbsp;0.00</span></span>
<span class="tx pn" style="left:207.8px;top:298.0px"><span class="cj">空单盈亏</span><span class="hw">:&nbsp;0.00</span></span>
<span class="tx pn" style="left:15.0px;top:316.0px"><span class="hw">---------</span></span>
<span class="tx pn" style="left:15.0px;top:334.0px"><span class="cj">账户余额</span><span class="hw">:&nbsp;16820.47</span></span>
<span class="tx pn" style="left:149.0px;top:334.0px"><span class="cj">账户净值</span><span class="hw">:&nbsp;16820.47</span></span>
<span class="tx pn" style="left:15.0px;top:352.0px"><span class="cj">持仓单数</span><span class="hw">:&nbsp;0</span></span>
<span class="tx pn" style="left:101.0px;top:352.0px"><span class="cj">持仓手数</span><span class="hw">:&nbsp;0.00</span></span>
<span class="tx pn" style="left:207.8px;top:352.0px"><span class="cj">持仓盈亏</span><span class="hw">:&nbsp;0.00</span></span>
<div class="abs" style="left:3px;top:59.0px;width:698px;height:1px;background:#8492a6"></div>
<svg class="abs" style="left:0;top:0" width="747" height="411" viewBox="0 0 747 411"><path d="M3.5 92.1V107.3M4.5 81.5V94.9M5.5 81.7V107.7M6.5 87.9V107.6M7.5 98.3V119.5M8.5 107.2V121.6M9.5 115.3V127.2M10.5 125.2V150.7M11.5 126.1V165.7M12.5 137.9V151.9M13.5 148.7V183.4M14.5 156.0V168.7M15.5 146.5V187.4M16.5 167.4V179.4M17.5 163.8V181.6M18.5 155.8V185.3M19.5 160.1V166.5M20.5 153.2V162.7M21.5 148.3V158.2M22.5 143.9V161.3M23.5 159.1V185.7M24.5 173.3V190.5M25.5 171.7V196.0M26.5 158.6V206.8M27.5 183.4V195.6M28.5 177.7V207.2M29.5 172.5V203.3M30.5 154.6V183.3M31.5 154.5V172.7M32.5 162.9V198.5M33.5 166.1V189.9M34.5 176.4V212.5M35.5 185.4V203.6M36.5 185.8V211.2M37.5 178.3V209.9M38.5 187.3V214.8M39.5 211.5V229.0M40.5 196.1V229.5M41.5 175.0V228.5M42.5 151.8V181.0M43.5 124.9V157.8M44.5 125.5V136.5M45.5 124.9V157.6M46.5 131.7V161.5M47.5 149.5V177.5M48.5 164.5V193.6M49.5 154.6V187.2M50.5 163.9V185.0M51.5 152.7V176.0M52.5 149.6V184.9M53.5 153.8V172.3M54.5 148.0V170.9M55.5 147.8V180.2M56.5 156.7V181.9M57.5 177.1V219.0M58.5 191.6V218.8M59.5 190.4V208.8M60.5 171.6V198.4M61.5 145.0V200.3M62.5 149.9V183.9M63.5 143.5V176.2M64.5 134.7V163.0M65.5 129.2V158.5M66.5 111.5V157.1M67.5 124.7V144.8M68.5 118.3V153.6M69.5 121.0V146.0M70.5 119.3V149.4M71.5 123.8V147.5M72.5 116.4V145.5M73.5 116.1V133.1M74.5 115.9V149.3M75.5 115.7V136.4M76.5 128.1V162.5M77.5 142.7V156.4M78.5 136.1V164.0M79.5 142.4V163.9M80.5 137.9V164.2M81.5 138.3V159.1M82.5 107.2V146.8M83.5 103.6V153.6M84.5 111.6V131.0M85.5 103.4V123.0M86.5 114.6V163.7M87.5 110.2V162.3M88.5 135.9V152.7M89.5 139.9V157.4M90.5 155.1V180.9M91.5 154.2V171.6M92.5 139.6V175.4M93.5 128.9V153.2M94.5 128.6V172.0M95.5 139.9V176.6M96.5 156.3V188.8M97.5 169.7V183.2M98.5 172.8V187.1M99.5 181.4V201.5M100.5 190.9V229.2M101.5 182.1V207.2M102.5 176.9V204.0M103.5 180.4V203.8M104.5 178.0V197.5M105.5 174.1V191.2M106.5 170.2V189.2M107.5 166.1V193.2M108.5 166.1V190.5M109.5 164.5V190.5M110.5 177.4V186.8M111.5 183.2V218.9M112.5 167.5V213.5M113.5 182.2V222.3M114.5 201.6V222.8M115.5 202.7V222.6M116.5 193.6V222.9M117.5 198.0V221.5M118.5 190.7V219.3M119.5 199.4V220.7M120.5 190.2V205.2M121.5 195.7V219.1M122.5 191.4V220.7M123.5 204.9V245.2M124.5 217.2V241.5M125.5 234.4V251.9M126.5 243.9V259.9M127.5 246.4V265.7M128.5 251.8V264.8M129.5 252.9V266.6M130.5 256.7V274.7M131.5 268.2V286.9M132.5 273.0V302.4M133.5 277.9V292.8M134.5 267.9V289.6M135.5 271.0V281.8M136.5 254.0V279.0M137.5 252.1V268.6M138.5 254.3V261.3M139.5 246.6V274.6M140.5 234.3V253.1M141.5 225.5V247.0M142.5 205.0V235.7M143.5 201.8V219.2M144.5 202.3V210.8M145.5 196.9V225.1M146.5 213.0V223.4M147.5 219.1V233.0M148.5 226.9V239.6M149.5 232.8V239.8M150.5 232.1V243.2M151.5 225.4V248.1M152.5 222.0V239.1M153.5 231.5V236.9M154.5 222.3V244.1M155.5 224.1V242.8M156.5 214.6V232.7M157.5 223.3V234.1M158.5 219.5V230.8M159.5 218.9V229.6M160.5 226.3V241.9M161.5 235.6V256.9M162.5 246.9V262.0M163.5 256.5V272.2M164.5 266.5V280.3M165.5 272.5V282.3M166.5 275.7V286.0M167.5 273.8V293.8M168.5 274.0V295.8M169.5 284.0V302.5M170.5 278.6V293.2M171.5 286.0V298.1M172.5 283.6V302.2M173.5 286.3V294.0M174.5 288.8V297.2M175.5 285.4V295.0M176.5 280.4V299.5M177.5 284.0V293.6M178.5 285.0V291.9M179.5 282.4V298.4M180.5 291.7V306.2M181.5 288.3V306.2M182.5 302.7V313.0M183.5 305.6V318.3M184.5 295.6V321.3M185.5 305.7V318.4M186.5 300.5V345.9M187.5 304.2V319.4M188.5 300.4V319.6M189.5 298.5V312.4M190.5 301.2V320.0M191.5 307.1V313.8M192.5 301.7V318.1M193.5 299.1V315.6M194.5 298.2V307.3M195.5 297.7V307.4M196.5 293.1V304.8M197.5 296.6V303.4M198.5 287.5V303.4M199.5 291.0V298.5M200.5 287.5V297.5M201.5 292.5V303.1M202.5 289.9V305.0M203.5 297.7V307.8M204.5 303.7V309.4M205.5 307.5V317.9M206.5 306.5V320.8M207.5 313.4V323.9M208.5 315.6V338.7M209.5 332.7V350.4M210.5 337.8V368.9M211.5 346.6V370.3M212.5 345.2V376.4M213.5 345.0V382.1M214.5 333.1V380.5M215.5 319.9V358.3M216.5 331.1V349.5M217.5 322.1V349.4M218.5 312.9V350.9M219.5 300.5V330.6M220.5 295.9V314.0M221.5 287.0V304.7M222.5 276.6V291.3M223.5 268.6V280.9M224.5 239.9V270.4M225.5 239.4V262.5M226.5 236.3V248.3M227.5 223.1V243.0M228.5 232.3V257.7M229.5 250.9V274.2M230.5 268.2V306.6M231.5 289.4V332.5M232.5 309.4V331.4M233.5 312.0V326.1M234.5 294.5V314.3M235.5 277.3V302.1M236.5 269.8V287.9M237.5 260.7V277.5M238.5 251.0V266.7M239.5 247.5V255.8M240.5 247.9V263.9M241.5 242.3V258.0M242.5 246.9V260.0M243.5 245.9V264.4M244.5 253.4V287.2M245.5 253.8V262.0M246.5 229.4V266.3M247.5 261.3V275.7M248.5 271.3V290.6M249.5 287.1V306.3M250.5 299.2V318.7M251.5 306.2V336.6M252.5 328.7V344.6M253.5 342.2V359.7M254.5 357.1V375.3M255.5 360.9V370.3M256.5 342.8V365.4M257.5 326.0V353.9M258.5 301.8V330.2M259.5 288.8V310.1M260.5 286.0V301.1M261.5 275.1V292.8M262.5 274.4V287.0M263.5 269.0V281.4M264.5 246.7V280.2M265.5 263.3V271.6M266.5 264.0V273.9M267.5 267.5V290.4M268.5 281.4V316.1M269.5 301.5V321.4M270.5 316.4V330.0M271.5 319.6V336.4M272.5 305.7V332.1M273.5 302.7V335.1M274.5 281.1V309.8M275.5 273.7V297.8M276.5 240.6V287.1M277.5 261.9V302.1M278.5 272.3V295.6M279.5 280.3V332.7M280.5 294.3V315.7M281.5 288.6V334.6M282.5 315.6V332.1M283.5 286.6V338.5M284.5 271.1V317.1M285.5 265.8V325.5M286.5 265.9V310.4M287.5 263.9V277.0M288.5 253.5V290.1M289.5 249.2V261.6M290.5 253.1V269.5M291.5 236.9V258.6M292.5 230.6V261.7M293.5 236.7V268.9M294.5 239.0V265.7M295.5 251.0V261.0M296.5 245.9V265.0M297.5 254.8V294.8M298.5 249.1V271.7M299.5 252.0V264.7M300.5 249.6V262.4M301.5 226.9V253.8M302.5 226.5V251.1M303.5 230.7V244.9M304.5 222.4V247.5M305.5 221.4V234.4M306.5 225.1V236.0M307.5 233.1V243.1M308.5 232.3V246.0M309.5 229.4V247.3M310.5 230.5V252.4M311.5 228.4V252.2M312.5 229.4V249.1M313.5 230.4V246.3M314.5 221.5V246.3M315.5 225.4V238.4M316.5 220.2V238.5M317.5 222.4V233.7M318.5 207.5V236.6M319.5 215.3V231.1M320.5 214.2V225.6M321.5 223.0V238.3M322.5 217.4V233.2M323.5 220.2V240.9M324.5 228.4V246.8M325.5 213.6V248.8M326.5 235.4V245.0M327.5 229.3V240.6M328.5 230.9V244.8M329.5 240.7V248.3M330.5 235.1V245.8M331.5 231.9V247.9M332.5 231.4V240.5M333.5 230.5V246.2M334.5 229.8V246.0M335.5 230.4V245.5M336.5 229.8V242.7M337.5 235.6V245.0M338.5 236.1V242.9M339.5 231.4V243.9M340.5 233.2V247.8M341.5 232.7V245.6M342.5 237.7V256.5M343.5 237.4V243.5M344.5 240.7V252.3M345.5 246.1V254.8M346.5 238.8V254.6M347.5 245.4V263.5M348.5 248.9V269.7M349.5 254.0V277.0M350.5 243.4V270.2M351.5 252.5V270.3M352.5 236.0V270.2M353.5 237.7V255.3M354.5 235.8V247.7M355.5 229.8V256.8M356.5 228.2V238.0M357.5 229.9V242.0M358.5 229.0V244.2M359.5 229.2V244.7M360.5 229.7V246.3M361.5 229.9V242.7M362.5 230.6V264.4M363.5 236.7V248.1M364.5 226.1V248.1M365.5 224.6V247.3M366.5 228.2V248.3M367.5 236.9V244.7M368.5 230.4V240.2M369.5 224.5V243.2M370.5 221.9V233.5M371.5 216.9V226.7M372.5 217.4V226.4M373.5 215.6V223.0M374.5 217.2V222.2M375.5 215.3V226.8M376.5 211.1V219.0M377.5 206.1V224.8M378.5 211.5V219.1M379.5 194.1V216.1M380.5 201.7V215.5M381.5 201.1V220.4M382.5 201.6V208.8M383.5 201.7V219.3M384.5 202.6V216.7M385.5 210.7V229.0M386.5 208.8V229.0M387.5 215.5V230.9M388.5 222.6V230.7M389.5 217.8V229.6M390.5 205.1V230.5M391.5 197.1V227.6M392.5 184.2V209.4M393.5 184.2V207.4M394.5 191.3V203.8M395.5 181.8V196.8M396.5 191.8V218.6M397.5 202.8V220.9M398.5 198.2V219.9M399.5 203.3V230.2M400.5 215.2V225.7M401.5 212.8V240.8M402.5 219.8V233.3M403.5 212.2V231.2M404.5 204.2V221.1M405.5 207.7V228.1M406.5 197.6V222.0M407.5 196.9V213.1M408.5 198.9V213.2M409.5 210.7V222.0M410.5 199.7V229.8M411.5 215.6V236.8M412.5 226.6V237.4M413.5 205.9V235.9M414.5 209.1V237.3M415.5 209.5V228.2M416.5 207.7V224.0M417.5 201.3V229.7M418.5 200.5V216.8M419.5 201.8V213.5M420.5 192.3V230.5M421.5 190.5V202.2M422.5 197.0V211.1M423.5 193.8V208.3M424.5 194.6V205.8M425.5 190.0V197.2M426.5 190.8V199.7M427.5 179.0V198.9M428.5 182.0V209.6M429.5 173.7V209.1M430.5 172.8V197.5M431.5 176.8V207.8M432.5 164.5V187.5M433.5 171.1V181.5M434.5 153.0V180.8M435.5 165.1V174.7M436.5 148.0V179.2M437.5 144.0V160.1M438.5 130.3V152.8M439.5 136.4V152.8M440.5 129.4V160.5M441.5 125.6V146.9M442.5 124.4V145.6M443.5 132.0V143.3M444.5 121.5V141.9M445.5 119.5V136.0M446.5 121.0V131.0M447.5 115.6V128.1M448.5 115.4V127.3M449.5 114.4V133.9M450.5 123.6V129.5M451.5 119.6V130.8M452.5 111.0V128.4M453.5 99.6V117.1M454.5 101.1V119.1M455.5 99.2V116.1M456.5 98.2V117.1M457.5 83.8V106.2M458.5 84.0V98.2M459.5 78.9V120.8M460.5 77.9V99.3M461.5 84.3V108.5M462.5 84.2V102.9M463.5 91.7V114.2M464.5 96.6V118.1M465.5 97.8V114.2M466.5 100.3V115.6M467.5 101.1V117.3M468.5 95.3V115.6M469.5 101.3V110.9M470.5 92.1V107.5M471.5 94.5V111.4M472.5 86.2V110.3M473.5 88.4V104.6M474.5 83.2V105.8M475.5 75.3V95.9M476.5 75.9V101.2M477.5 63.7V99.2M478.5 66.7V96.5M479.5 74.1V94.0M480.5 74.0V88.0M481.5 73.8V98.9M482.5 81.9V99.8M483.5 83.4V111.7M484.5 97.2V117.3M485.5 104.0V120.5M486.5 97.2V122.6M487.5 111.1V122.3M488.5 114.7V127.9M489.5 110.5V128.2M490.5 118.0V135.3M491.5 123.6V134.8M492.5 126.7V145.8M493.5 128.7V144.4M494.5 122.5V140.2M495.5 130.9V148.9M496.5 134.7V142.4M497.5 131.8V148.0M498.5 128.1V151.3M499.5 137.3V150.9M500.5 122.8V144.0M501.5 108.8V132.6M502.5 109.0V122.9M503.5 97.9V121.9M504.5 87.0V102.6M505.5 85.0V97.3M506.5 76.2V93.5M507.5 78.5V92.2M508.5 72.3V88.7M509.5 73.8V82.4M510.5 67.3V79.7M511.5 67.2V80.6M512.5 72.5V88.3M513.5 72.3V102.9M514.5 93.6V114.3M515.5 98.5V130.8M516.5 115.6V144.5M517.5 112.1V149.5M518.5 123.3V134.2M519.5 117.7V135.9M520.5 110.1V139.0M521.5 101.1V136.9M522.5 116.7V130.0M523.5 94.2V125.9M524.5 95.3V115.4M525.5 95.2V124.5M526.5 102.8V126.4M527.5 106.3V123.2M528.5 104.0V130.0M529.5 111.6V131.0M530.5 124.4V141.5M531.5 132.3V143.9M532.5 139.4V163.7M533.5 132.6V149.4M534.5 145.0V153.7M535.5 148.5V158.2M536.5 151.4V161.7M537.5 152.7V163.1M538.5 160.7V165.3M539.5 162.2V171.6M540.5 148.6V164.4M541.5 133.5V153.6M542.5 124.7V140.9M543.5 110.2V127.5M544.5 103.7V117.6M545.5 94.5V106.3M546.5 84.4V97.2M547.5 77.8V89.0M548.5 69.5V80.1M549.5 59.3V82.9M550.5 51.7V66.5M551.5 35.3V57.4M552.5 34.1V47.1M553.5 28.2V37.6M554.5 28.3V46.8M555.5 34.6V55.0M556.5 48.5V56.7M557.5 51.5V64.5M558.5 58.9V69.6M559.5 63.8V75.0" fill="none" stroke="#00ff00" stroke-width="1" shape-rendering="crispEdges"/><line x1="58" y1="160" x2="122" y2="243" stroke="#0000ff" stroke-width="1.1" stroke-dasharray="3 4"/><line x1="139" y1="232" x2="214" y2="363" stroke="#0000ff" stroke-width="1.1" stroke-dasharray="3 4"/><line x1="217" y1="278" x2="227" y2="233" stroke="#0000ff" stroke-width="1.1" stroke-dasharray="3 4"/><path d="M119.5 244.0 L126.0 239.5 L126.0 248.5 Z" fill="#0000ff" stroke="#fff" stroke-width="1"/><path d="M224.0 230.5 L230.5 226.0 L230.5 235.0 Z" fill="#0000ff" stroke="#fff" stroke-width="1"/><path d="M211.0 365.0 L217.5 360.5 L217.5 369.5 Z" fill="#0000ff" stroke="#fff" stroke-width="1"/><path d="M53.0 156.5 H56.0 V154.0 L60.5 158.0 L56.0 162.0 V159.5 H53.0 Z" fill="#0000ff" stroke="#fff" stroke-width="2" paint-order="stroke" stroke-linejoin="miter"/><path d="M133.5 228.5 H136.5 V226.0 L141.0 230.0 L136.5 234.0 V231.5 H133.5 Z" fill="#0000ff" stroke="#fff" stroke-width="2" paint-order="stroke" stroke-linejoin="miter"/><path d="M212.0 278.5 H215.0 V276.0 L219.5 280.0 L215.0 284.0 V281.5 H212.0 Z" fill="#0000ff" stroke="#fff" stroke-width="2" paint-order="stroke" stroke-linejoin="miter"/><path d="M556 4 H564 L560 8 Z" fill="#7f8ea6"/><path d="M8 9.5 H15 L11.5 13.5 Z" fill="#fff"/><rect x="702" y="20.5" width="3" height="1" fill="#fff"/><rect x="702" y="53.5" width="3" height="1" fill="#fff"/><rect x="702" y="86.5" width="3" height="1" fill="#fff"/><rect x="702" y="119.5" width="3" height="1" fill="#fff"/><rect x="702" y="152.5" width="3" height="1" fill="#fff"/><rect x="702" y="185.5" width="3" height="1" fill="#fff"/><rect x="702" y="218.5" width="3" height="1" fill="#fff"/><rect x="702" y="251.5" width="3" height="1" fill="#fff"/><rect x="702" y="284.5" width="3" height="1" fill="#fff"/><rect x="702" y="317.5" width="3" height="1" fill="#fff"/><rect x="702" y="350.5" width="3" height="1" fill="#fff"/><rect x="702" y="383.5" width="3" height="1" fill="#fff"/><rect x="3" y="391" width="1" height="3" fill="#fff"/><rect x="67" y="391" width="1" height="3" fill="#fff"/><rect x="131" y="391" width="1" height="3" fill="#fff"/><rect x="195" y="391" width="1" height="3" fill="#fff"/><rect x="259" y="391" width="1" height="3" fill="#fff"/><rect x="323" y="391" width="1" height="3" fill="#fff"/><rect x="387" y="391" width="1" height="3" fill="#fff"/><rect x="451" y="391" width="1" height="3" fill="#fff"/><rect x="515" y="391" width="1" height="3" fill="#fff"/></svg>
<div class="abs" style="left:3px;top:3px;width:699px;height:388px;border:1px solid #fff"></div>
<span class="tx ax hd" style="left:19px;top:7px">GBPCAD-R,M1&nbsp; 1.71401 1.71414 1.71397 1.71410</span>
<span class="tx lab" style="left:583px;top:7px">预言家Prophet3（晨露）</span>
<svg class="abs" style="left:684px;top:6px" width="13" height="13" viewBox="0 0 13 13"><circle cx="6.5" cy="6.5" r="5.4" fill="none" stroke="#fff" stroke-width="1"/><circle cx="4.6" cy="5" r="0.8" fill="#fff"/><circle cx="8.4" cy="5" r="0.8" fill="#fff"/><path d="M3.6 7.6 Q6.5 10.6 9.4 7.6" fill="none" stroke="#fff" stroke-width="1"/></svg>
<span class="tx ax" style="left:708px;top:16.0px">1.71445</span>
<span class="tx ax" style="left:708px;top:49.0px">1.71415</span>
<span class="tx ax" style="left:708px;top:82.0px">1.71385</span>
<span class="tx ax" style="left:708px;top:115.0px">1.71355</span>
<span class="tx ax" style="left:708px;top:148.0px">1.71325</span>
<span class="tx ax" style="left:708px;top:181.0px">1.71295</span>
<span class="tx ax" style="left:708px;top:214.0px">1.71265</span>
<span class="tx ax" style="left:708px;top:247.0px">1.71235</span>
<span class="tx ax" style="left:708px;top:280.0px">1.71205</span>
<span class="tx ax" style="left:708px;top:313.0px">1.71175</span>
<span class="tx ax" style="left:708px;top:346.0px">1.71145</span>
<span class="tx ax" style="left:708px;top:379.0px">1.71115</span>
<span class="tx ax cur" style="left:703px;top:54.0px;color:#000000">1.71410</span>
<span class="tx ax" style="left:3px;top:395px">21 Mar 2024</span>
<span class="tx ax" style="left:67px;top:395px">21 Mar 21:19</span>
<span class="tx ax" style="left:131px;top:395px">21 Mar 22:23</span>
<span class="tx ax" style="left:195px;top:395px">21 Mar 23:27</span>
<span class="tx ax" style="left:259px;top:395px">22 Mar 00:35</span>
<span class="tx ax" style="left:323px;top:395px">22 Mar 01:39</span>
<span class="tx ax" style="left:387px;top:395px">22 Mar 02:43</span>
<span class="tx ax" style="left:451px;top:395px">22 Mar 03:47</span>
<span class="tx ax" style="left:515px;top:395px">22 Mar 04:51</span>
<div class="btn b1" style="left:546px;top:145px;color:#a52a2a"><span class="cj">可做多中…</span></div>
<div class="btn b1" style="left:546px;top:180px;color:#008b8b"><span class="cj">可做空中…</span></div>
<div class="btn b2" style="left:546px;top:215px"><span class="cj">盈利平仓后停止</span><span class="hw">EA?</span></div>
<div class="btn b3" style="left:546px;top:250px"><span class="cj">总盈利</span><span class="hw">N</span><span class="cj">平仓</span></div>
<div class="btn ed" style="left:546px;top:285px"><span class="hw">100.00</span></div>
<div class="btn b3" style="left:546px;top:320px"><span class="cj">总亏损</span><span class="hw">N</span><span class="cj">平仓</span></div>
<div class="btn ed" style="left:546px;top:355px"><span class="hw">100.00</span></div></div>
<div class="abs" style="left:110px;top:494px;width:152px;height:1px;background:#f2f6fb"></div><div class="abs" style="left:0;top:949px;width:1536px;height:22px;background:#f0f0f0;border-top:1px solid #5c5c5c"></div><span class="tx tab" style="left:18px;top:956px">EURUSD-R,M1</span><span class="tx tab" style="left:126px;top:956px">GBPUSD-R,M1</span><span class="tx tab" style="left:233px;top:956px">EURAUD-R,M1</span><span class="tx tab" style="left:341px;top:956px">EURUSD-R,H1</span><div class="abs" style="left:114px;top:954px;width:1px;height:13px;background:#8a8a8a"></div><div class="abs" style="left:222px;top:954px;width:1px;height:13px;background:#8a8a8a"></div><div class="abs" style="left:330px;top:954px;width:1px;height:13px;background:#8a8a8a"></div><div class="abs" style="left:434px;top:950px;width:108px;height:21px;background:#fff;border:1px solid #000;border-top:none"></div><span class="tx tab" style="left:446px;top:956px;color:#000">GBPCAD-R,M1</span><svg class="abs" style="left:1500px;top:955px" width="32" height="12" viewBox="0 0 32 12"><path d="M9 1.500 v8 l-4.500 -4 z M22 1.500 v8 l4.500 -4 z" fill="#9a9a9a"/></svg><div class="abs" style="left:0;top:971px;width:1536px;height:23px;background:#f0f0f0;border-top:1px solid #dadada"></div><span class="tx" style="left:2px;top:977px;font-size:12px;font-family:'Liberation Sans','Noto Sans CJK SC',sans-serif">寻求帮助,请按F1键</span><div class="abs" style="left:722px;top:975px;width:1px;height:17px;background:#c4c4c4"></div><div class="abs" style="left:856px;top:975px;width:1px;height:17px;background:#c4c4c4"></div><div class="abs" style="left:973px;top:975px;width:1px;height:17px;background:#c4c4c4"></div><div class="abs" style="left:1054px;top:975px;width:1px;height:17px;background:#c4c4c4"></div><div class="abs" style="left:1136px;top:975px;width:1px;height:17px;background:#c4c4c4"></div><div class="abs" style="left:1214px;top:975px;width:1px;height:17px;background:#c4c4c4"></div><div class="abs" style="left:1294px;top:975px;width:1px;height:17px;background:#c4c4c4"></div><div class="abs" style="left:1374px;top:975px;width:1px;height:17px;background:#c4c4c4"></div><span class="tx" style="left:727px;top:977px;font-size:12.300px;letter-spacing:0.3px">Default</span><svg class="abs" style="left:1378px;top:976px" width="24" height="14" viewBox="0 0 24 14"><rect x="0.0" y="5.0" width="1.500" height="9.0" fill="#4a8a28"/><rect x="2.4" y="4.5" width="1.500" height="9.6" fill="#4a8a28"/><rect x="4.8" y="3.9" width="1.500" height="10.1" fill="#4a8a28"/><rect x="7.2" y="3.3" width="1.500" height="10.7" fill="#4a8a28"/><rect x="9.6" y="2.8" width="1.500" height="11.2" fill="#c83020"/><rect x="12.0" y="2.2" width="1.500" height="11.8" fill="#c83020"/><rect x="14.4" y="1.7" width="1.500" height="12.3" fill="#c83020"/><rect x="16.8" y="1.1" width="1.500" height="12.9" fill="#c83020"/><rect x="19.2" y="0.6" width="1.500" height="13.4" fill="#c83020"/><rect x="21.6" y="0.0" width="1.500" height="13.9" fill="#c83020"/></svg><span class="tx" style="left:1405px;top:977px;font-size:12.300px;letter-spacing:0.4px">168561/60 kb</span><div class="abs" style="left:0;top:994px;width:1536px;height:8px;background:#1f2e3c"></div><div class="abs" style="left:187px;top:995px;width:34px;height:7px;background:#dcc22c"></div><div class="abs" style="left:224px;top:995px;width:34px;height:7px;background:#4e5a66"></div><div class="abs" style="left:261px;top:995px;width:34px;height:7px;background:#4e5a66"></div><div class="abs" style="left:298px;top:995px;width:34px;height:7px;background:#4e5a66"></div><div class="abs" style="left:409px;top:995px;width:34px;height:7px;background:#4e5a66"></div><div class="abs" style="left:446px;top:995px;width:34px;height:7px;background:#76808a"></div><div class="abs" style="left:520px;top:995px;width:34px;height:7px;background:#4e5a66"></div><div class="abs" style="left:557px;top:995px;width:34px;height:7px;background:#4e5a66"></div><div class="abs" style="left:20px;top:1000px;width:4px;height:2px;background:#e8e8e8"></div><div class="abs" style="left:55px;top:1000px;width:4px;height:2px;background:#e8e8e8"></div><div class="abs" style="left:85px;top:1000px;width:10px;height:2px;background:#e05048"></div><div class="abs" style="left:124px;top:1000px;width:10px;height:2px;background:#e8e8e8"></div><div class="abs" style="left:350px;top:1000px;width:6px;height:2px;background:#d03030"></div><div class="abs" style="left:1205px;top:1000px;width:12px;height:2px;background:#e8501c"></div><div class="abs" style="left:1262px;top:1000px;width:10px;height:2px;background:#e8501c"></div><div class="abs" style="left:1497px;top:1000px;width:12px;height:2px;background:#f0f0f0"></div>
</body></html>
